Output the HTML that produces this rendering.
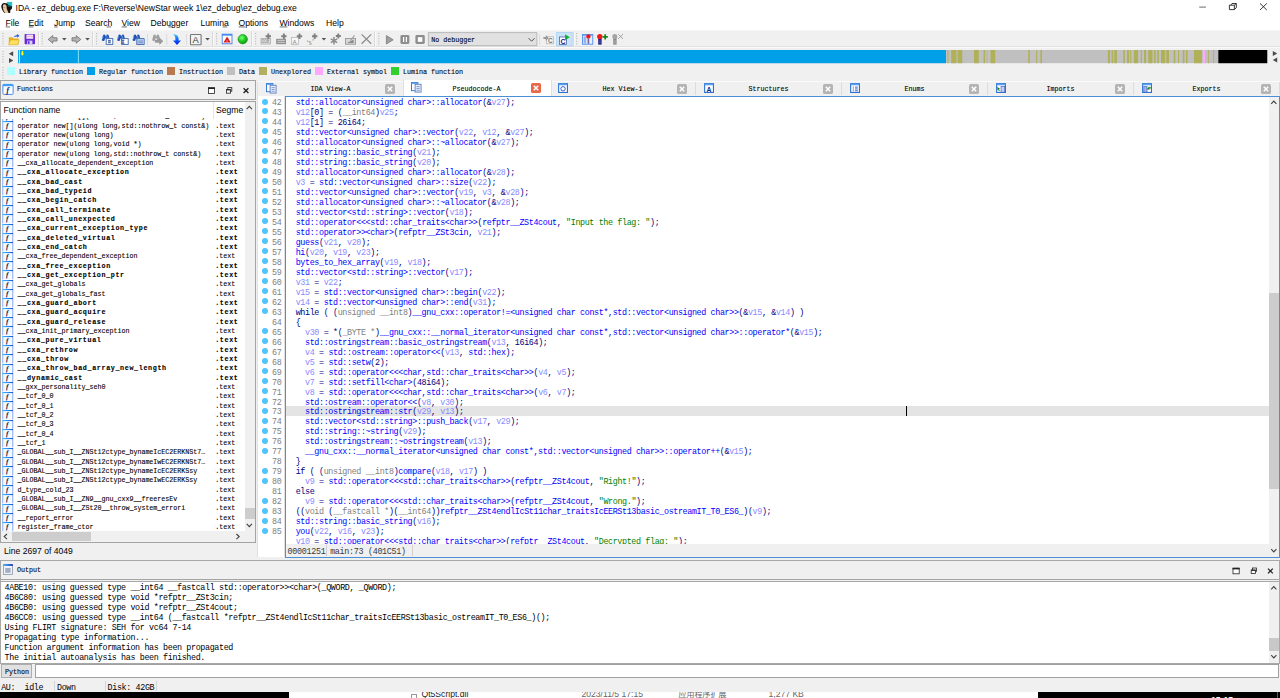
<!DOCTYPE html>
<html><head><meta charset="utf-8"><title>IDA - ez_debug.exe</title>
<style>
*{box-sizing:border-box;margin:0;padding:0}
html,body{width:1280px;height:698px;overflow:hidden;background:#f0f0f0}
body{position:relative;font-family:"Liberation Sans",sans-serif;font-size:8px;color:#000}
.a{position:absolute}
.ui{font-family:"Liberation Sans",sans-serif;font-size:8.3px;white-space:pre;color:#000}
.sim{font-family:"Liberation Mono",monospace;font-size:6.7px;letter-spacing:-0.02px;white-space:pre;color:#000;-webkit-text-stroke:0.1px #000}
.code{font-family:"Liberation Mono",monospace;font-size:8.4px;letter-spacing:-0.365px;white-space:pre;line-height:10px}
.fn{color:#0000ff}.va{color:#8a8aff}.kw{color:#000080}.gr{color:#808080}.st{color:#008000}
</style></head>
<body>
<div class="a" style="left:0px;top:0px;width:1280px;height:30px;background:#fff;"></div>
<div class="a ui" style="left:15.5px;top:2.5px;font-size:8.6px">IDA - ez_debug.exe F:\Reverse\NewStar week 1\ez_debug\ez_debug.exe</div>
<div class="a ui" style="left:5.5px;top:17.5px;font-size:8.6px">File</div>
<div class="a ui" style="left:28.5px;top:17.5px;font-size:8.6px">Edit</div>
<div class="a ui" style="left:54px;top:17.5px;font-size:8.6px">Jump</div>
<div class="a ui" style="left:85px;top:17.5px;font-size:8.6px">Search</div>
<div class="a ui" style="left:121.5px;top:17.5px;font-size:8.6px">View</div>
<div class="a ui" style="left:150.5px;top:17.5px;font-size:8.6px">Debugger</div>
<div class="a ui" style="left:200.5px;top:17.5px;font-size:8.6px">Lumina</div>
<div class="a ui" style="left:238.5px;top:17.5px;font-size:8.6px">Options</div>
<div class="a ui" style="left:279.5px;top:17.5px;font-size:8.6px">Windows</div>
<div class="a ui" style="left:326px;top:17.5px;font-size:8.6px">Help</div>
<div class="a" style="left:0px;top:30px;width:1280px;height:18px;background:#f0f0f0;"></div>
<div class="a" style="left:7.4px;top:67.2px;width:8px;height:8px;background:#b0ffff;"></div>
<div class="a sim" style="left:19px;top:67.8px;">Library function</div>
<div class="a" style="left:87.4px;top:67.2px;width:8px;height:8px;background:#00a0e8;"></div>
<div class="a sim" style="left:99px;top:67.8px;">Regular function</div>
<div class="a" style="left:167.4px;top:67.2px;width:8px;height:8px;background:#b87850;"></div>
<div class="a sim" style="left:179px;top:67.8px;">Instruction</div>
<div class="a" style="left:227.4px;top:67.2px;width:8px;height:8px;background:#c0c0c0;"></div>
<div class="a sim" style="left:239px;top:67.8px;">Data</div>
<div class="a" style="left:259.4px;top:67.2px;width:8px;height:8px;background:#b0b060;"></div>
<div class="a sim" style="left:271px;top:67.8px;">Unexplored</div>
<div class="a" style="left:315.4px;top:67.2px;width:8px;height:8px;background:#ffa8ff;"></div>
<div class="a sim" style="left:327px;top:67.8px;">External symbol</div>
<div class="a" style="left:391.4px;top:67.2px;width:8px;height:8px;background:#30d030;"></div>
<div class="a sim" style="left:403px;top:67.8px;">Lumina function</div>
<div class="a" style="left:0px;top:80px;width:256.3px;height:20px;background:#f0f0f0;border:1px solid #a4a4a4;border-right-width:1.6px;"></div>
<div class="a" style="left:0px;top:101px;width:256.3px;height:441.6px;background:#f0f0f0;border:1px solid #a4a4a4;border-right-width:1.6px;"></div>
<div class="a sim" style="left:17px;top:85.2px;">Functions</div>
<div class="a" style="left:1px;top:102px;width:243.5px;height:429px;background:#fff;"></div>
<div class="a" style="left:1px;top:118.2px;width:243px;height:2.6px;overflow:hidden"><div class="a sim" style="left:16.6px;top:-6.5px">operator delete[](void *,std::nothrow_t const&amp;)</div><div class="a sim" style="left:214.2px;top:-6.5px">.text</div></div>
<div class="a ui" style="left:3.5px;top:105px;font-size:8.6px">Function name</div>
<div class="a ui" style="left:216px;top:105px;font-size:8.6px">Segme</div>
<div class="a" style="left:213px;top:102px;width:1px;height:17px;background:#e5e5e5;"></div>
<svg class="a" width="0" height="0" style="left:0;top:0"><defs><linearGradient id="fg" x1="0" y1="0" x2="1" y2="0"><stop offset="0" stop-color="#38c4f8"/><stop offset="1" stop-color="#2050e0"/></linearGradient></defs></svg>
<svg class="a" style="left:2.3px;top:120.9px" width="11.4" height="9.4" viewBox="0 0 11.4 9.4"><rect x="0" y="0" width="11.4" height="9.4" fill="#f4fbff"/><rect x="0" y="0" width="1.3" height="9.4" fill="#a6c2f4"/><rect x="10" y="0" width="1.4" height="9.4" fill="#a6c2f4"/><rect x="0.4" y="0" width="10.6" height="1.1" fill="url(#fg)"/><text x="4" y="7.2" text-rendering="geometricPrecision" font-family="Liberation Serif,serif" font-style="italic" font-weight="bold" font-size="7" fill="#0c1440">f</text></svg>
<div class="a sim" style="left:17.6px;top:121.8px;">operator new[](ulong long,std::nothrow_t const&amp;)</div>
<div class="a sim" style="left:215.2px;top:121.8px;">.text</div>
<svg class="a" style="left:2.3px;top:130.23px" width="11.4" height="9.4" viewBox="0 0 11.4 9.4"><rect x="0" y="0" width="11.4" height="9.4" fill="#f4fbff"/><rect x="0" y="0" width="1.3" height="9.4" fill="#a6c2f4"/><rect x="10" y="0" width="1.4" height="9.4" fill="#a6c2f4"/><rect x="0.4" y="0" width="10.6" height="1.1" fill="url(#fg)"/><text x="4" y="7.2" text-rendering="geometricPrecision" font-family="Liberation Serif,serif" font-style="italic" font-weight="bold" font-size="7" fill="#0c1440">f</text></svg>
<div class="a sim" style="left:17.6px;top:131.13px;">operator new(ulong long)</div>
<div class="a sim" style="left:215.2px;top:131.13px;">.text</div>
<svg class="a" style="left:2.3px;top:139.57px" width="11.4" height="9.4" viewBox="0 0 11.4 9.4"><rect x="0" y="0" width="11.4" height="9.4" fill="#f4fbff"/><rect x="0" y="0" width="1.3" height="9.4" fill="#a6c2f4"/><rect x="10" y="0" width="1.4" height="9.4" fill="#a6c2f4"/><rect x="0.4" y="0" width="10.6" height="1.1" fill="url(#fg)"/><text x="4" y="7.2" text-rendering="geometricPrecision" font-family="Liberation Serif,serif" font-style="italic" font-weight="bold" font-size="7" fill="#0c1440">f</text></svg>
<div class="a sim" style="left:17.6px;top:140.47px;">operator new(ulong long,void *)</div>
<div class="a sim" style="left:215.2px;top:140.47px;">.text</div>
<svg class="a" style="left:2.3px;top:148.9px" width="11.4" height="9.4" viewBox="0 0 11.4 9.4"><rect x="0" y="0" width="11.4" height="9.4" fill="#f4fbff"/><rect x="0" y="0" width="1.3" height="9.4" fill="#a6c2f4"/><rect x="10" y="0" width="1.4" height="9.4" fill="#a6c2f4"/><rect x="0.4" y="0" width="10.6" height="1.1" fill="url(#fg)"/><text x="4" y="7.2" text-rendering="geometricPrecision" font-family="Liberation Serif,serif" font-style="italic" font-weight="bold" font-size="7" fill="#0c1440">f</text></svg>
<div class="a sim" style="left:17.6px;top:149.8px;">operator new(ulong long,std::nothrow_t const&amp;)</div>
<div class="a sim" style="left:215.2px;top:149.8px;">.text</div>
<svg class="a" style="left:2.3px;top:158.23px" width="11.4" height="9.4" viewBox="0 0 11.4 9.4"><rect x="0" y="0" width="11.4" height="9.4" fill="#f4fbff"/><rect x="0" y="0" width="1.3" height="9.4" fill="#a6c2f4"/><rect x="10" y="0" width="1.4" height="9.4" fill="#a6c2f4"/><rect x="0.4" y="0" width="10.6" height="1.1" fill="url(#fg)"/><text x="4" y="7.2" text-rendering="geometricPrecision" font-family="Liberation Serif,serif" font-style="italic" font-weight="bold" font-size="7" fill="#0c1440">f</text></svg>
<div class="a sim" style="left:17.6px;top:159.13px;">__cxa_allocate_dependent_exception</div>
<div class="a sim" style="left:215.2px;top:159.13px;">.text</div>
<svg class="a" style="left:2.3px;top:167.57px" width="11.4" height="9.4" viewBox="0 0 11.4 9.4"><rect x="0" y="0" width="11.4" height="9.4" fill="#f4fbff"/><rect x="0" y="0" width="1.3" height="9.4" fill="#a6c2f4"/><rect x="10" y="0" width="1.4" height="9.4" fill="#a6c2f4"/><rect x="0.4" y="0" width="10.6" height="1.1" fill="url(#fg)"/><text x="4" y="7.2" text-rendering="geometricPrecision" font-family="Liberation Serif,serif" font-style="italic" font-weight="bold" font-size="7" fill="#0c1440">f</text></svg>
<div class="a sim" style="left:17.6px;top:168.47px;font-weight:bold;letter-spacing:0.647px;">__cxa_allocate_exception</div>
<div class="a sim" style="left:215.2px;top:168.47px;font-weight:bold;letter-spacing:0.647px;">.text</div>
<svg class="a" style="left:2.3px;top:176.9px" width="11.4" height="9.4" viewBox="0 0 11.4 9.4"><rect x="0" y="0" width="11.4" height="9.4" fill="#f4fbff"/><rect x="0" y="0" width="1.3" height="9.4" fill="#a6c2f4"/><rect x="10" y="0" width="1.4" height="9.4" fill="#a6c2f4"/><rect x="0.4" y="0" width="10.6" height="1.1" fill="url(#fg)"/><text x="4" y="7.2" text-rendering="geometricPrecision" font-family="Liberation Serif,serif" font-style="italic" font-weight="bold" font-size="7" fill="#0c1440">f</text></svg>
<div class="a sim" style="left:17.6px;top:177.8px;font-weight:bold;letter-spacing:0.647px;">__cxa_bad_cast</div>
<div class="a sim" style="left:215.2px;top:177.8px;font-weight:bold;letter-spacing:0.647px;">.text</div>
<svg class="a" style="left:2.3px;top:186.23px" width="11.4" height="9.4" viewBox="0 0 11.4 9.4"><rect x="0" y="0" width="11.4" height="9.4" fill="#f4fbff"/><rect x="0" y="0" width="1.3" height="9.4" fill="#a6c2f4"/><rect x="10" y="0" width="1.4" height="9.4" fill="#a6c2f4"/><rect x="0.4" y="0" width="10.6" height="1.1" fill="url(#fg)"/><text x="4" y="7.2" text-rendering="geometricPrecision" font-family="Liberation Serif,serif" font-style="italic" font-weight="bold" font-size="7" fill="#0c1440">f</text></svg>
<div class="a sim" style="left:17.6px;top:187.13px;font-weight:bold;letter-spacing:0.647px;">__cxa_bad_typeid</div>
<div class="a sim" style="left:215.2px;top:187.13px;font-weight:bold;letter-spacing:0.647px;">.text</div>
<svg class="a" style="left:2.3px;top:195.57px" width="11.4" height="9.4" viewBox="0 0 11.4 9.4"><rect x="0" y="0" width="11.4" height="9.4" fill="#f4fbff"/><rect x="0" y="0" width="1.3" height="9.4" fill="#a6c2f4"/><rect x="10" y="0" width="1.4" height="9.4" fill="#a6c2f4"/><rect x="0.4" y="0" width="10.6" height="1.1" fill="url(#fg)"/><text x="4" y="7.2" text-rendering="geometricPrecision" font-family="Liberation Serif,serif" font-style="italic" font-weight="bold" font-size="7" fill="#0c1440">f</text></svg>
<div class="a sim" style="left:17.6px;top:196.47px;font-weight:bold;letter-spacing:0.647px;">__cxa_begin_catch</div>
<div class="a sim" style="left:215.2px;top:196.47px;font-weight:bold;letter-spacing:0.647px;">.text</div>
<svg class="a" style="left:2.3px;top:204.9px" width="11.4" height="9.4" viewBox="0 0 11.4 9.4"><rect x="0" y="0" width="11.4" height="9.4" fill="#f4fbff"/><rect x="0" y="0" width="1.3" height="9.4" fill="#a6c2f4"/><rect x="10" y="0" width="1.4" height="9.4" fill="#a6c2f4"/><rect x="0.4" y="0" width="10.6" height="1.1" fill="url(#fg)"/><text x="4" y="7.2" text-rendering="geometricPrecision" font-family="Liberation Serif,serif" font-style="italic" font-weight="bold" font-size="7" fill="#0c1440">f</text></svg>
<div class="a sim" style="left:17.6px;top:205.8px;font-weight:bold;letter-spacing:0.647px;">__cxa_call_terminate</div>
<div class="a sim" style="left:215.2px;top:205.8px;font-weight:bold;letter-spacing:0.647px;">.text</div>
<svg class="a" style="left:2.3px;top:214.23px" width="11.4" height="9.4" viewBox="0 0 11.4 9.4"><rect x="0" y="0" width="11.4" height="9.4" fill="#f4fbff"/><rect x="0" y="0" width="1.3" height="9.4" fill="#a6c2f4"/><rect x="10" y="0" width="1.4" height="9.4" fill="#a6c2f4"/><rect x="0.4" y="0" width="10.6" height="1.1" fill="url(#fg)"/><text x="4" y="7.2" text-rendering="geometricPrecision" font-family="Liberation Serif,serif" font-style="italic" font-weight="bold" font-size="7" fill="#0c1440">f</text></svg>
<div class="a sim" style="left:17.6px;top:215.13px;font-weight:bold;letter-spacing:0.647px;">__cxa_call_unexpected</div>
<div class="a sim" style="left:215.2px;top:215.13px;font-weight:bold;letter-spacing:0.647px;">.text</div>
<svg class="a" style="left:2.3px;top:223.57px" width="11.4" height="9.4" viewBox="0 0 11.4 9.4"><rect x="0" y="0" width="11.4" height="9.4" fill="#f4fbff"/><rect x="0" y="0" width="1.3" height="9.4" fill="#a6c2f4"/><rect x="10" y="0" width="1.4" height="9.4" fill="#a6c2f4"/><rect x="0.4" y="0" width="10.6" height="1.1" fill="url(#fg)"/><text x="4" y="7.2" text-rendering="geometricPrecision" font-family="Liberation Serif,serif" font-style="italic" font-weight="bold" font-size="7" fill="#0c1440">f</text></svg>
<div class="a sim" style="left:17.6px;top:224.47px;font-weight:bold;letter-spacing:0.647px;">__cxa_current_exception_type</div>
<div class="a sim" style="left:215.2px;top:224.47px;font-weight:bold;letter-spacing:0.647px;">.text</div>
<svg class="a" style="left:2.3px;top:232.9px" width="11.4" height="9.4" viewBox="0 0 11.4 9.4"><rect x="0" y="0" width="11.4" height="9.4" fill="#f4fbff"/><rect x="0" y="0" width="1.3" height="9.4" fill="#a6c2f4"/><rect x="10" y="0" width="1.4" height="9.4" fill="#a6c2f4"/><rect x="0.4" y="0" width="10.6" height="1.1" fill="url(#fg)"/><text x="4" y="7.2" text-rendering="geometricPrecision" font-family="Liberation Serif,serif" font-style="italic" font-weight="bold" font-size="7" fill="#0c1440">f</text></svg>
<div class="a sim" style="left:17.6px;top:233.8px;font-weight:bold;letter-spacing:0.647px;">__cxa_deleted_virtual</div>
<div class="a sim" style="left:215.2px;top:233.8px;font-weight:bold;letter-spacing:0.647px;">.text</div>
<svg class="a" style="left:2.3px;top:242.23px" width="11.4" height="9.4" viewBox="0 0 11.4 9.4"><rect x="0" y="0" width="11.4" height="9.4" fill="#f4fbff"/><rect x="0" y="0" width="1.3" height="9.4" fill="#a6c2f4"/><rect x="10" y="0" width="1.4" height="9.4" fill="#a6c2f4"/><rect x="0.4" y="0" width="10.6" height="1.1" fill="url(#fg)"/><text x="4" y="7.2" text-rendering="geometricPrecision" font-family="Liberation Serif,serif" font-style="italic" font-weight="bold" font-size="7" fill="#0c1440">f</text></svg>
<div class="a sim" style="left:17.6px;top:243.13px;font-weight:bold;letter-spacing:0.647px;">__cxa_end_catch</div>
<div class="a sim" style="left:215.2px;top:243.13px;font-weight:bold;letter-spacing:0.647px;">.text</div>
<svg class="a" style="left:2.3px;top:251.57px" width="11.4" height="9.4" viewBox="0 0 11.4 9.4"><rect x="0" y="0" width="11.4" height="9.4" fill="#f4fbff"/><rect x="0" y="0" width="1.3" height="9.4" fill="#a6c2f4"/><rect x="10" y="0" width="1.4" height="9.4" fill="#a6c2f4"/><rect x="0.4" y="0" width="10.6" height="1.1" fill="url(#fg)"/><text x="4" y="7.2" text-rendering="geometricPrecision" font-family="Liberation Serif,serif" font-style="italic" font-weight="bold" font-size="7" fill="#0c1440">f</text></svg>
<div class="a sim" style="left:17.6px;top:252.47px;">__cxa_free_dependent_exception</div>
<div class="a sim" style="left:215.2px;top:252.47px;">.text</div>
<svg class="a" style="left:2.3px;top:260.9px" width="11.4" height="9.4" viewBox="0 0 11.4 9.4"><rect x="0" y="0" width="11.4" height="9.4" fill="#f4fbff"/><rect x="0" y="0" width="1.3" height="9.4" fill="#a6c2f4"/><rect x="10" y="0" width="1.4" height="9.4" fill="#a6c2f4"/><rect x="0.4" y="0" width="10.6" height="1.1" fill="url(#fg)"/><text x="4" y="7.2" text-rendering="geometricPrecision" font-family="Liberation Serif,serif" font-style="italic" font-weight="bold" font-size="7" fill="#0c1440">f</text></svg>
<div class="a sim" style="left:17.6px;top:261.8px;font-weight:bold;letter-spacing:0.647px;">__cxa_free_exception</div>
<div class="a sim" style="left:215.2px;top:261.8px;font-weight:bold;letter-spacing:0.647px;">.text</div>
<svg class="a" style="left:2.3px;top:270.23px" width="11.4" height="9.4" viewBox="0 0 11.4 9.4"><rect x="0" y="0" width="11.4" height="9.4" fill="#f4fbff"/><rect x="0" y="0" width="1.3" height="9.4" fill="#a6c2f4"/><rect x="10" y="0" width="1.4" height="9.4" fill="#a6c2f4"/><rect x="0.4" y="0" width="10.6" height="1.1" fill="url(#fg)"/><text x="4" y="7.2" text-rendering="geometricPrecision" font-family="Liberation Serif,serif" font-style="italic" font-weight="bold" font-size="7" fill="#0c1440">f</text></svg>
<div class="a sim" style="left:17.6px;top:271.13px;font-weight:bold;letter-spacing:0.647px;">__cxa_get_exception_ptr</div>
<div class="a sim" style="left:215.2px;top:271.13px;font-weight:bold;letter-spacing:0.647px;">.text</div>
<svg class="a" style="left:2.3px;top:279.57px" width="11.4" height="9.4" viewBox="0 0 11.4 9.4"><rect x="0" y="0" width="11.4" height="9.4" fill="#f4fbff"/><rect x="0" y="0" width="1.3" height="9.4" fill="#a6c2f4"/><rect x="10" y="0" width="1.4" height="9.4" fill="#a6c2f4"/><rect x="0.4" y="0" width="10.6" height="1.1" fill="url(#fg)"/><text x="4" y="7.2" text-rendering="geometricPrecision" font-family="Liberation Serif,serif" font-style="italic" font-weight="bold" font-size="7" fill="#0c1440">f</text></svg>
<div class="a sim" style="left:17.6px;top:280.47px;">__cxa_get_globals</div>
<div class="a sim" style="left:215.2px;top:280.47px;">.text</div>
<svg class="a" style="left:2.3px;top:288.9px" width="11.4" height="9.4" viewBox="0 0 11.4 9.4"><rect x="0" y="0" width="11.4" height="9.4" fill="#f4fbff"/><rect x="0" y="0" width="1.3" height="9.4" fill="#a6c2f4"/><rect x="10" y="0" width="1.4" height="9.4" fill="#a6c2f4"/><rect x="0.4" y="0" width="10.6" height="1.1" fill="url(#fg)"/><text x="4" y="7.2" text-rendering="geometricPrecision" font-family="Liberation Serif,serif" font-style="italic" font-weight="bold" font-size="7" fill="#0c1440">f</text></svg>
<div class="a sim" style="left:17.6px;top:289.8px;">__cxa_get_globals_fast</div>
<div class="a sim" style="left:215.2px;top:289.8px;">.text</div>
<svg class="a" style="left:2.3px;top:298.23px" width="11.4" height="9.4" viewBox="0 0 11.4 9.4"><rect x="0" y="0" width="11.4" height="9.4" fill="#f4fbff"/><rect x="0" y="0" width="1.3" height="9.4" fill="#a6c2f4"/><rect x="10" y="0" width="1.4" height="9.4" fill="#a6c2f4"/><rect x="0.4" y="0" width="10.6" height="1.1" fill="url(#fg)"/><text x="4" y="7.2" text-rendering="geometricPrecision" font-family="Liberation Serif,serif" font-style="italic" font-weight="bold" font-size="7" fill="#0c1440">f</text></svg>
<div class="a sim" style="left:17.6px;top:299.13px;font-weight:bold;letter-spacing:0.647px;">__cxa_guard_abort</div>
<div class="a sim" style="left:215.2px;top:299.13px;font-weight:bold;letter-spacing:0.647px;">.text</div>
<svg class="a" style="left:2.3px;top:307.57px" width="11.4" height="9.4" viewBox="0 0 11.4 9.4"><rect x="0" y="0" width="11.4" height="9.4" fill="#f4fbff"/><rect x="0" y="0" width="1.3" height="9.4" fill="#a6c2f4"/><rect x="10" y="0" width="1.4" height="9.4" fill="#a6c2f4"/><rect x="0.4" y="0" width="10.6" height="1.1" fill="url(#fg)"/><text x="4" y="7.2" text-rendering="geometricPrecision" font-family="Liberation Serif,serif" font-style="italic" font-weight="bold" font-size="7" fill="#0c1440">f</text></svg>
<div class="a sim" style="left:17.6px;top:308.47px;font-weight:bold;letter-spacing:0.647px;">__cxa_guard_acquire</div>
<div class="a sim" style="left:215.2px;top:308.47px;font-weight:bold;letter-spacing:0.647px;">.text</div>
<svg class="a" style="left:2.3px;top:316.9px" width="11.4" height="9.4" viewBox="0 0 11.4 9.4"><rect x="0" y="0" width="11.4" height="9.4" fill="#f4fbff"/><rect x="0" y="0" width="1.3" height="9.4" fill="#a6c2f4"/><rect x="10" y="0" width="1.4" height="9.4" fill="#a6c2f4"/><rect x="0.4" y="0" width="10.6" height="1.1" fill="url(#fg)"/><text x="4" y="7.2" text-rendering="geometricPrecision" font-family="Liberation Serif,serif" font-style="italic" font-weight="bold" font-size="7" fill="#0c1440">f</text></svg>
<div class="a sim" style="left:17.6px;top:317.8px;font-weight:bold;letter-spacing:0.647px;">__cxa_guard_release</div>
<div class="a sim" style="left:215.2px;top:317.8px;font-weight:bold;letter-spacing:0.647px;">.text</div>
<svg class="a" style="left:2.3px;top:326.23px" width="11.4" height="9.4" viewBox="0 0 11.4 9.4"><rect x="0" y="0" width="11.4" height="9.4" fill="#f4fbff"/><rect x="0" y="0" width="1.3" height="9.4" fill="#a6c2f4"/><rect x="10" y="0" width="1.4" height="9.4" fill="#a6c2f4"/><rect x="0.4" y="0" width="10.6" height="1.1" fill="url(#fg)"/><text x="4" y="7.2" text-rendering="geometricPrecision" font-family="Liberation Serif,serif" font-style="italic" font-weight="bold" font-size="7" fill="#0c1440">f</text></svg>
<div class="a sim" style="left:17.6px;top:327.13px;">__cxa_init_primary_exception</div>
<div class="a sim" style="left:215.2px;top:327.13px;">.text</div>
<svg class="a" style="left:2.3px;top:335.57px" width="11.4" height="9.4" viewBox="0 0 11.4 9.4"><rect x="0" y="0" width="11.4" height="9.4" fill="#f4fbff"/><rect x="0" y="0" width="1.3" height="9.4" fill="#a6c2f4"/><rect x="10" y="0" width="1.4" height="9.4" fill="#a6c2f4"/><rect x="0.4" y="0" width="10.6" height="1.1" fill="url(#fg)"/><text x="4" y="7.2" text-rendering="geometricPrecision" font-family="Liberation Serif,serif" font-style="italic" font-weight="bold" font-size="7" fill="#0c1440">f</text></svg>
<div class="a sim" style="left:17.6px;top:336.47px;font-weight:bold;letter-spacing:0.647px;">__cxa_pure_virtual</div>
<div class="a sim" style="left:215.2px;top:336.47px;font-weight:bold;letter-spacing:0.647px;">.text</div>
<svg class="a" style="left:2.3px;top:344.9px" width="11.4" height="9.4" viewBox="0 0 11.4 9.4"><rect x="0" y="0" width="11.4" height="9.4" fill="#f4fbff"/><rect x="0" y="0" width="1.3" height="9.4" fill="#a6c2f4"/><rect x="10" y="0" width="1.4" height="9.4" fill="#a6c2f4"/><rect x="0.4" y="0" width="10.6" height="1.1" fill="url(#fg)"/><text x="4" y="7.2" text-rendering="geometricPrecision" font-family="Liberation Serif,serif" font-style="italic" font-weight="bold" font-size="7" fill="#0c1440">f</text></svg>
<div class="a sim" style="left:17.6px;top:345.8px;font-weight:bold;letter-spacing:0.647px;">__cxa_rethrow</div>
<div class="a sim" style="left:215.2px;top:345.8px;font-weight:bold;letter-spacing:0.647px;">.text</div>
<svg class="a" style="left:2.3px;top:354.23px" width="11.4" height="9.4" viewBox="0 0 11.4 9.4"><rect x="0" y="0" width="11.4" height="9.4" fill="#f4fbff"/><rect x="0" y="0" width="1.3" height="9.4" fill="#a6c2f4"/><rect x="10" y="0" width="1.4" height="9.4" fill="#a6c2f4"/><rect x="0.4" y="0" width="10.6" height="1.1" fill="url(#fg)"/><text x="4" y="7.2" text-rendering="geometricPrecision" font-family="Liberation Serif,serif" font-style="italic" font-weight="bold" font-size="7" fill="#0c1440">f</text></svg>
<div class="a sim" style="left:17.6px;top:355.13px;font-weight:bold;letter-spacing:0.647px;">__cxa_throw</div>
<div class="a sim" style="left:215.2px;top:355.13px;font-weight:bold;letter-spacing:0.647px;">.text</div>
<svg class="a" style="left:2.3px;top:363.57px" width="11.4" height="9.4" viewBox="0 0 11.4 9.4"><rect x="0" y="0" width="11.4" height="9.4" fill="#f4fbff"/><rect x="0" y="0" width="1.3" height="9.4" fill="#a6c2f4"/><rect x="10" y="0" width="1.4" height="9.4" fill="#a6c2f4"/><rect x="0.4" y="0" width="10.6" height="1.1" fill="url(#fg)"/><text x="4" y="7.2" text-rendering="geometricPrecision" font-family="Liberation Serif,serif" font-style="italic" font-weight="bold" font-size="7" fill="#0c1440">f</text></svg>
<div class="a sim" style="left:17.6px;top:364.47px;font-weight:bold;letter-spacing:0.647px;">__cxa_throw_bad_array_new_length</div>
<div class="a sim" style="left:215.2px;top:364.47px;font-weight:bold;letter-spacing:0.647px;">.text</div>
<svg class="a" style="left:2.3px;top:372.9px" width="11.4" height="9.4" viewBox="0 0 11.4 9.4"><rect x="0" y="0" width="11.4" height="9.4" fill="#f4fbff"/><rect x="0" y="0" width="1.3" height="9.4" fill="#a6c2f4"/><rect x="10" y="0" width="1.4" height="9.4" fill="#a6c2f4"/><rect x="0.4" y="0" width="10.6" height="1.1" fill="url(#fg)"/><text x="4" y="7.2" text-rendering="geometricPrecision" font-family="Liberation Serif,serif" font-style="italic" font-weight="bold" font-size="7" fill="#0c1440">f</text></svg>
<div class="a sim" style="left:17.6px;top:373.8px;font-weight:bold;letter-spacing:0.647px;">__dynamic_cast</div>
<div class="a sim" style="left:215.2px;top:373.8px;font-weight:bold;letter-spacing:0.647px;">.text</div>
<svg class="a" style="left:2.3px;top:382.23px" width="11.4" height="9.4" viewBox="0 0 11.4 9.4"><rect x="0" y="0" width="11.4" height="9.4" fill="#f4fbff"/><rect x="0" y="0" width="1.3" height="9.4" fill="#a6c2f4"/><rect x="10" y="0" width="1.4" height="9.4" fill="#a6c2f4"/><rect x="0.4" y="0" width="10.6" height="1.1" fill="url(#fg)"/><text x="4" y="7.2" text-rendering="geometricPrecision" font-family="Liberation Serif,serif" font-style="italic" font-weight="bold" font-size="7" fill="#0c1440">f</text></svg>
<div class="a sim" style="left:17.6px;top:383.13px;">__gxx_personality_seh0</div>
<div class="a sim" style="left:215.2px;top:383.13px;">.text</div>
<svg class="a" style="left:2.3px;top:391.57px" width="11.4" height="9.4" viewBox="0 0 11.4 9.4"><rect x="0" y="0" width="11.4" height="9.4" fill="#f4fbff"/><rect x="0" y="0" width="1.3" height="9.4" fill="#a6c2f4"/><rect x="10" y="0" width="1.4" height="9.4" fill="#a6c2f4"/><rect x="0.4" y="0" width="10.6" height="1.1" fill="url(#fg)"/><text x="4" y="7.2" text-rendering="geometricPrecision" font-family="Liberation Serif,serif" font-style="italic" font-weight="bold" font-size="7" fill="#0c1440">f</text></svg>
<div class="a sim" style="left:17.6px;top:392.47px;">__tcf_0_0</div>
<div class="a sim" style="left:215.2px;top:392.47px;">.text</div>
<svg class="a" style="left:2.3px;top:400.9px" width="11.4" height="9.4" viewBox="0 0 11.4 9.4"><rect x="0" y="0" width="11.4" height="9.4" fill="#f4fbff"/><rect x="0" y="0" width="1.3" height="9.4" fill="#a6c2f4"/><rect x="10" y="0" width="1.4" height="9.4" fill="#a6c2f4"/><rect x="0.4" y="0" width="10.6" height="1.1" fill="url(#fg)"/><text x="4" y="7.2" text-rendering="geometricPrecision" font-family="Liberation Serif,serif" font-style="italic" font-weight="bold" font-size="7" fill="#0c1440">f</text></svg>
<div class="a sim" style="left:17.6px;top:401.8px;">__tcf_0_1</div>
<div class="a sim" style="left:215.2px;top:401.8px;">.text</div>
<svg class="a" style="left:2.3px;top:410.23px" width="11.4" height="9.4" viewBox="0 0 11.4 9.4"><rect x="0" y="0" width="11.4" height="9.4" fill="#f4fbff"/><rect x="0" y="0" width="1.3" height="9.4" fill="#a6c2f4"/><rect x="10" y="0" width="1.4" height="9.4" fill="#a6c2f4"/><rect x="0.4" y="0" width="10.6" height="1.1" fill="url(#fg)"/><text x="4" y="7.2" text-rendering="geometricPrecision" font-family="Liberation Serif,serif" font-style="italic" font-weight="bold" font-size="7" fill="#0c1440">f</text></svg>
<div class="a sim" style="left:17.6px;top:411.13px;">__tcf_0_2</div>
<div class="a sim" style="left:215.2px;top:411.13px;">.text</div>
<svg class="a" style="left:2.3px;top:419.57px" width="11.4" height="9.4" viewBox="0 0 11.4 9.4"><rect x="0" y="0" width="11.4" height="9.4" fill="#f4fbff"/><rect x="0" y="0" width="1.3" height="9.4" fill="#a6c2f4"/><rect x="10" y="0" width="1.4" height="9.4" fill="#a6c2f4"/><rect x="0.4" y="0" width="10.6" height="1.1" fill="url(#fg)"/><text x="4" y="7.2" text-rendering="geometricPrecision" font-family="Liberation Serif,serif" font-style="italic" font-weight="bold" font-size="7" fill="#0c1440">f</text></svg>
<div class="a sim" style="left:17.6px;top:420.47px;">__tcf_0_3</div>
<div class="a sim" style="left:215.2px;top:420.47px;">.text</div>
<svg class="a" style="left:2.3px;top:428.9px" width="11.4" height="9.4" viewBox="0 0 11.4 9.4"><rect x="0" y="0" width="11.4" height="9.4" fill="#f4fbff"/><rect x="0" y="0" width="1.3" height="9.4" fill="#a6c2f4"/><rect x="10" y="0" width="1.4" height="9.4" fill="#a6c2f4"/><rect x="0.4" y="0" width="10.6" height="1.1" fill="url(#fg)"/><text x="4" y="7.2" text-rendering="geometricPrecision" font-family="Liberation Serif,serif" font-style="italic" font-weight="bold" font-size="7" fill="#0c1440">f</text></svg>
<div class="a sim" style="left:17.6px;top:429.8px;">__tcf_0_4</div>
<div class="a sim" style="left:215.2px;top:429.8px;">.text</div>
<svg class="a" style="left:2.3px;top:438.23px" width="11.4" height="9.4" viewBox="0 0 11.4 9.4"><rect x="0" y="0" width="11.4" height="9.4" fill="#f4fbff"/><rect x="0" y="0" width="1.3" height="9.4" fill="#a6c2f4"/><rect x="10" y="0" width="1.4" height="9.4" fill="#a6c2f4"/><rect x="0.4" y="0" width="10.6" height="1.1" fill="url(#fg)"/><text x="4" y="7.2" text-rendering="geometricPrecision" font-family="Liberation Serif,serif" font-style="italic" font-weight="bold" font-size="7" fill="#0c1440">f</text></svg>
<div class="a sim" style="left:17.6px;top:439.13px;">__tcf_1</div>
<div class="a sim" style="left:215.2px;top:439.13px;">.text</div>
<svg class="a" style="left:2.3px;top:447.57px" width="11.4" height="9.4" viewBox="0 0 11.4 9.4"><rect x="0" y="0" width="11.4" height="9.4" fill="#f4fbff"/><rect x="0" y="0" width="1.3" height="9.4" fill="#a6c2f4"/><rect x="10" y="0" width="1.4" height="9.4" fill="#a6c2f4"/><rect x="0.4" y="0" width="10.6" height="1.1" fill="url(#fg)"/><text x="4" y="7.2" text-rendering="geometricPrecision" font-family="Liberation Serif,serif" font-style="italic" font-weight="bold" font-size="7" fill="#0c1440">f</text></svg>
<div class="a sim" style="left:17.6px;top:448.47px;">_GLOBAL__sub_I__ZNSt12ctype_bynameIcEC2ERKNSt7…</div>
<div class="a sim" style="left:215.2px;top:448.47px;">.text</div>
<svg class="a" style="left:2.3px;top:456.9px" width="11.4" height="9.4" viewBox="0 0 11.4 9.4"><rect x="0" y="0" width="11.4" height="9.4" fill="#f4fbff"/><rect x="0" y="0" width="1.3" height="9.4" fill="#a6c2f4"/><rect x="10" y="0" width="1.4" height="9.4" fill="#a6c2f4"/><rect x="0.4" y="0" width="10.6" height="1.1" fill="url(#fg)"/><text x="4" y="7.2" text-rendering="geometricPrecision" font-family="Liberation Serif,serif" font-style="italic" font-weight="bold" font-size="7" fill="#0c1440">f</text></svg>
<div class="a sim" style="left:17.6px;top:457.8px;">_GLOBAL__sub_I__ZNSt12ctype_bynameIwEC2ERKNSt7…</div>
<div class="a sim" style="left:215.2px;top:457.8px;">.text</div>
<svg class="a" style="left:2.3px;top:466.23px" width="11.4" height="9.4" viewBox="0 0 11.4 9.4"><rect x="0" y="0" width="11.4" height="9.4" fill="#f4fbff"/><rect x="0" y="0" width="1.3" height="9.4" fill="#a6c2f4"/><rect x="10" y="0" width="1.4" height="9.4" fill="#a6c2f4"/><rect x="0.4" y="0" width="10.6" height="1.1" fill="url(#fg)"/><text x="4" y="7.2" text-rendering="geometricPrecision" font-family="Liberation Serif,serif" font-style="italic" font-weight="bold" font-size="7" fill="#0c1440">f</text></svg>
<div class="a sim" style="left:17.6px;top:467.13px;">_GLOBAL__sub_I__ZNSt12ctype_bynameIcEC2ERKSsy</div>
<div class="a sim" style="left:215.2px;top:467.13px;">.text</div>
<svg class="a" style="left:2.3px;top:475.57px" width="11.4" height="9.4" viewBox="0 0 11.4 9.4"><rect x="0" y="0" width="11.4" height="9.4" fill="#f4fbff"/><rect x="0" y="0" width="1.3" height="9.4" fill="#a6c2f4"/><rect x="10" y="0" width="1.4" height="9.4" fill="#a6c2f4"/><rect x="0.4" y="0" width="10.6" height="1.1" fill="url(#fg)"/><text x="4" y="7.2" text-rendering="geometricPrecision" font-family="Liberation Serif,serif" font-style="italic" font-weight="bold" font-size="7" fill="#0c1440">f</text></svg>
<div class="a sim" style="left:17.6px;top:476.47px;">_GLOBAL__sub_I__ZNSt12ctype_bynameIwEC2ERKSsy</div>
<div class="a sim" style="left:215.2px;top:476.47px;">.text</div>
<svg class="a" style="left:2.3px;top:484.9px" width="11.4" height="9.4" viewBox="0 0 11.4 9.4"><rect x="0" y="0" width="11.4" height="9.4" fill="#f4fbff"/><rect x="0" y="0" width="1.3" height="9.4" fill="#a6c2f4"/><rect x="10" y="0" width="1.4" height="9.4" fill="#a6c2f4"/><rect x="0.4" y="0" width="10.6" height="1.1" fill="url(#fg)"/><text x="4" y="7.2" text-rendering="geometricPrecision" font-family="Liberation Serif,serif" font-style="italic" font-weight="bold" font-size="7" fill="#0c1440">f</text></svg>
<div class="a sim" style="left:17.6px;top:485.8px;">d_type_cold_23</div>
<div class="a sim" style="left:215.2px;top:485.8px;">.text</div>
<svg class="a" style="left:2.3px;top:494.23px" width="11.4" height="9.4" viewBox="0 0 11.4 9.4"><rect x="0" y="0" width="11.4" height="9.4" fill="#f4fbff"/><rect x="0" y="0" width="1.3" height="9.4" fill="#a6c2f4"/><rect x="10" y="0" width="1.4" height="9.4" fill="#a6c2f4"/><rect x="0.4" y="0" width="10.6" height="1.1" fill="url(#fg)"/><text x="4" y="7.2" text-rendering="geometricPrecision" font-family="Liberation Serif,serif" font-style="italic" font-weight="bold" font-size="7" fill="#0c1440">f</text></svg>
<div class="a sim" style="left:17.6px;top:495.13px;">_GLOBAL__sub_I__ZN9__gnu_cxx9__freeresEv</div>
<div class="a sim" style="left:215.2px;top:495.13px;">.text</div>
<svg class="a" style="left:2.3px;top:503.57px" width="11.4" height="9.4" viewBox="0 0 11.4 9.4"><rect x="0" y="0" width="11.4" height="9.4" fill="#f4fbff"/><rect x="0" y="0" width="1.3" height="9.4" fill="#a6c2f4"/><rect x="10" y="0" width="1.4" height="9.4" fill="#a6c2f4"/><rect x="0.4" y="0" width="10.6" height="1.1" fill="url(#fg)"/><text x="4" y="7.2" text-rendering="geometricPrecision" font-family="Liberation Serif,serif" font-style="italic" font-weight="bold" font-size="7" fill="#0c1440">f</text></svg>
<div class="a sim" style="left:17.6px;top:504.47px;">_GLOBAL__sub_I__ZSt20__throw_system_errori</div>
<div class="a sim" style="left:215.2px;top:504.47px;">.text</div>
<svg class="a" style="left:2.3px;top:512.9px" width="11.4" height="9.4" viewBox="0 0 11.4 9.4"><rect x="0" y="0" width="11.4" height="9.4" fill="#f4fbff"/><rect x="0" y="0" width="1.3" height="9.4" fill="#a6c2f4"/><rect x="10" y="0" width="1.4" height="9.4" fill="#a6c2f4"/><rect x="0.4" y="0" width="10.6" height="1.1" fill="url(#fg)"/><text x="4" y="7.2" text-rendering="geometricPrecision" font-family="Liberation Serif,serif" font-style="italic" font-weight="bold" font-size="7" fill="#0c1440">f</text></svg>
<div class="a sim" style="left:17.6px;top:513.8px;">__report_error</div>
<div class="a sim" style="left:215.2px;top:513.8px;">.text</div>
<svg class="a" style="left:2.3px;top:522.23px" width="11.4" height="9.4" viewBox="0 0 11.4 9.4"><rect x="0" y="0" width="11.4" height="9.4" fill="#f4fbff"/><rect x="0" y="0" width="1.3" height="9.4" fill="#a6c2f4"/><rect x="10" y="0" width="1.4" height="9.4" fill="#a6c2f4"/><rect x="0.4" y="0" width="10.6" height="1.1" fill="url(#fg)"/><text x="4" y="7.2" text-rendering="geometricPrecision" font-family="Liberation Serif,serif" font-style="italic" font-weight="bold" font-size="7" fill="#0c1440">f</text></svg>
<div class="a sim" style="left:17.6px;top:523.13px;">register_frame_ctor</div>
<div class="a sim" style="left:215.2px;top:523.13px;">.text</div>
<div class="a" style="left:2.3px;top:118.6px;width:11.4px;height:2.6px;overflow:hidden"><svg class="a" style="left:0px;top:-6.8px" width="11.4" height="9.4" viewBox="0 0 11.4 9.4"><rect x="0" y="0" width="11.4" height="9.4" fill="#f4fbff"/><rect x="0" y="0" width="1.3" height="9.4" fill="#a6c2f4"/><rect x="10" y="0" width="1.4" height="9.4" fill="#a6c2f4"/><rect x="0.4" y="0" width="10.6" height="1.1" fill="url(#fg)"/><text x="4" y="7.2" text-rendering="geometricPrecision" font-family="Liberation Serif,serif" font-style="italic" font-weight="bold" font-size="7" fill="#0c1440">f</text></svg></div>
<div class="a" style="left:244.5px;top:102px;width:10px;height:429px;background:#f0f0f0;"></div>
<div class="a" style="left:244.5px;top:507.5px;width:10px;height:11.5px;background:#cdcdcd;"></div>
<div class="a" style="left:1px;top:531px;width:254px;height:11px;background:#f0f0f0;"></div>
<div class="a" style="left:12px;top:532px;width:79px;height:8.8px;background:#cdcdcd;"></div>
<div class="a ui" style="left:4px;top:545.7px;font-size:8.6px">Line 2697 of 4049</div>
<div class="a" style="left:258px;top:81px;width:1022px;height:15px;background:#f0f0f0;border-top:1px solid #fafafa;"></div>
<div class="a" style="left:403px;top:82px;width:1px;height:13px;background:#dcdcdc;"></div>
<svg class="a" style="left:266px;top:82.5px" width="11" height="11" viewBox="0 0 12 12"><rect x="0.5" y="0.5" width="7" height="9" fill="#fff" stroke="#2a6fd0"/><rect x="0.5" y="0.5" width="7" height="1.6" fill="#58a0f0"/><rect x="4.5" y="2.5" width="6.5" height="8.5" fill="#e8f0ff" stroke="#6080c0"/><path d="M6 5h3.5M6 7h3.5M6 9h3.5" stroke="#6080c0" stroke-width="0.8"/></svg>
<div class="a sim" style="left:310.5px;top:85.3px;">IDA View-A</div>
<svg class="a" style="left:385px;top:83.5px" width="10" height="10" viewBox="0 0 10 10"><rect x="0" y="0" width="10" height="10" rx="1.6" fill="#b4b4b4"/><path d="M2.8 2.8l4.4 4.4M7.2 2.8l-4.4 4.4" stroke="#fff" stroke-width="1.5"/></svg>
<div class="a" style="left:403px;top:80px;width:148.5px;height:16.5px;background:#fff;border-left:1px solid #e0e0e0;border-right:1px solid #e0e0e0;"></div>
<svg class="a" style="left:411px;top:82px" width="11" height="11" viewBox="0 0 12 12"><rect x="0.5" y="0.5" width="7" height="9" fill="#fff" stroke="#2a6fd0"/><rect x="0.5" y="0.5" width="7" height="1.6" fill="#58a0f0"/><rect x="4.5" y="2.5" width="6.5" height="8.5" fill="#e8f0ff" stroke="#6080c0"/><path d="M6 5h3.5M6 7h3.5M6 9h3.5" stroke="#6080c0" stroke-width="0.8"/></svg>
<div class="a sim" style="left:452.5px;top:84.8px;">Pseudocode-A</div>
<svg class="a" style="left:531px;top:83px" width="10" height="10" viewBox="0 0 10 10"><rect x="0" y="0" width="10" height="10" rx="1.6" fill="#e8694a"/><path d="M2.8 2.8l4.4 4.4M7.2 2.8l-4.4 4.4" stroke="#fff" stroke-width="1.5"/></svg>
<div class="a" style="left:695px;top:82px;width:1px;height:13px;background:#dcdcdc;"></div>
<svg class="a" style="left:558px;top:82.5px" width="11" height="11" viewBox="0 0 12 12"><rect x="0.7" y="0.7" width="9.6" height="9.6" fill="#fff" stroke="#2a6fd0" stroke-width="1.2"/><rect x="0.7" y="0.7" width="9.6" height="1.8" fill="#58a0f0"/><circle cx="5.5" cy="6.3" r="2.4" fill="none" stroke="#2a50d0" stroke-width="1"/></svg>
<div class="a sim" style="left:602.5px;top:85.3px;">Hex View-1</div>
<svg class="a" style="left:677px;top:83.5px" width="10" height="10" viewBox="0 0 10 10"><rect x="0" y="0" width="10" height="10" rx="1.6" fill="#b4b4b4"/><path d="M2.8 2.8l4.4 4.4M7.2 2.8l-4.4 4.4" stroke="#fff" stroke-width="1.5"/></svg>
<div class="a" style="left:841px;top:82px;width:1px;height:13px;background:#dcdcdc;"></div>
<svg class="a" style="left:704px;top:82.5px" width="11" height="11" viewBox="0 0 12 12"><rect x="0.7" y="0.7" width="9.6" height="9.6" fill="#fff" stroke="#2a6fd0" stroke-width="1.2"/><rect x="0.7" y="0.7" width="9.6" height="1.8" fill="#58a0f0"/><text x="2.6" y="9.3" font-family="Liberation Sans,sans-serif" font-weight="bold" font-size="7.5" fill="#103090">A</text></svg>
<div class="a sim" style="left:748.5px;top:85.3px;">Structures</div>
<svg class="a" style="left:823px;top:83.5px" width="10" height="10" viewBox="0 0 10 10"><rect x="0" y="0" width="10" height="10" rx="1.6" fill="#b4b4b4"/><path d="M2.8 2.8l4.4 4.4M7.2 2.8l-4.4 4.4" stroke="#fff" stroke-width="1.5"/></svg>
<div class="a" style="left:987px;top:82px;width:1px;height:13px;background:#dcdcdc;"></div>
<svg class="a" style="left:850px;top:82.5px" width="11" height="11" viewBox="0 0 12 12"><rect x="0.7" y="0.7" width="9.6" height="9.6" fill="#fff" stroke="#2a6fd0" stroke-width="1.2"/><rect x="0.7" y="0.7" width="9.6" height="1.8" fill="#58a0f0"/><path d="M3 4.5h1.2M3 6.5h1.2M3 8.5h1.2M5.5 4.5h3M5.5 6.5h3M5.5 8.5h3" stroke="#2a50d0" stroke-width="1"/></svg>
<div class="a sim" style="left:904.5px;top:85.3px;">Enums</div>
<svg class="a" style="left:969px;top:83.5px" width="10" height="10" viewBox="0 0 10 10"><rect x="0" y="0" width="10" height="10" rx="1.6" fill="#b4b4b4"/><path d="M2.8 2.8l4.4 4.4M7.2 2.8l-4.4 4.4" stroke="#fff" stroke-width="1.5"/></svg>
<div class="a" style="left:1133px;top:82px;width:1px;height:13px;background:#dcdcdc;"></div>
<svg class="a" style="left:996px;top:82.5px" width="11" height="11" viewBox="0 0 12 12"><rect x="0.7" y="0.7" width="9.6" height="9.6" fill="#fff" stroke="#2a6fd0" stroke-width="1.2"/><rect x="0.7" y="0.7" width="9.6" height="1.8" fill="#58a0f0"/><rect x="5.5" y="4" width="4" height="6" fill="#c0d0ff" stroke="#4060b0" stroke-width="0.7"/><path d="M1.5 4l3 2.5-1.3.3 1 1.8-.9.4-1-1.8-.8.8z" fill="#108010"/></svg>
<div class="a sim" style="left:1046.5px;top:85.3px;">Imports</div>
<svg class="a" style="left:1115px;top:83.5px" width="10" height="10" viewBox="0 0 10 10"><rect x="0" y="0" width="10" height="10" rx="1.6" fill="#b4b4b4"/><path d="M2.8 2.8l4.4 4.4M7.2 2.8l-4.4 4.4" stroke="#fff" stroke-width="1.5"/></svg>
<div class="a" style="left:1279px;top:82px;width:1px;height:13px;background:#dcdcdc;"></div>
<svg class="a" style="left:1142px;top:82.5px" width="11" height="11" viewBox="0 0 12 12"><rect x="0.7" y="0.7" width="9.6" height="9.6" fill="#fff" stroke="#2a6fd0" stroke-width="1.2"/><rect x="0.7" y="0.7" width="9.6" height="1.8" fill="#58a0f0"/><rect x="2" y="4" width="3.5" height="6" fill="#a0b0f0" stroke="#4060b0" stroke-width="0.7"/><path d="M5 7l3-3.5.2 1.3 1.8-.3v1.2l-1.9.2.3 1.2z" fill="#108010"/></svg>
<div class="a sim" style="left:1192.5px;top:85.3px;">Exports</div>
<svg class="a" style="left:1261px;top:83.5px" width="10" height="10" viewBox="0 0 10 10"><rect x="0" y="0" width="10" height="10" rx="1.6" fill="#b4b4b4"/><path d="M2.8 2.8l4.4 4.4M7.2 2.8l-4.4 4.4" stroke="#fff" stroke-width="1.5"/></svg>
<div class="a" style="left:258px;top:96px;width:26px;height:461px;background:#fff;"></div>
<div class="a" style="left:257px;top:82px;width:1px;height:475px;background:#e2e2e2;"></div>
<div class="a" style="left:284px;top:96px;width:1px;height:461px;background:#e0e0e0;"></div>
<div class="a" style="left:285px;top:96px;width:995px;height:462px;background:#fff;border:1px solid #4a90d9;"></div>
<div class="a" style="left:286px;top:405.9px;width:983px;height:10px;background:#e4e4e4;"></div>
<div class="a" style="left:906.2px;top:406.2px;width:1.2px;height:9.6px;background:#000;"></div>
<div class="a" style="left:1269px;top:97px;width:9.6px;height:460px;background:#f0f0f0;"></div>
<div class="a" style="left:1269px;top:293px;width:9.6px;height:196px;background:#cdcdcd;"></div>
<div class="a" style="left:286px;top:544px;width:982.5px;height:13px;background:#f0f0f0;"></div>
<div class="a" style="left:261.8px;top:98.5px;width:6px;height:6px;background:#4fc4ff;border-radius:50%;"></div>
<div class="a code" style="left:272px;top:97.8px;color:#808080">42</div>
<div class="a code" style="left:295.7px;top:97.8px;"><span class="fn">std::allocator&lt;unsigned char&gt;::allocator</span><span class="kw">(</span><span class="kw">&amp;</span><span class="va">v27</span><span class="kw">)</span><span class="kw">;</span></div>
<div class="a" style="left:261.8px;top:108.49px;width:6px;height:6px;background:#4fc4ff;border-radius:50%;"></div>
<div class="a code" style="left:272px;top:107.79px;color:#808080">43</div>
<div class="a code" style="left:295.7px;top:107.79px;"><span class="va">v12</span><span class="kw">[</span><span class="kw">0</span><span class="kw">]</span><span class="kw"> </span><span class="kw">=</span><span class="kw"> </span><span class="kw">(</span><span class="gr">__int64</span><span class="kw">)</span><span class="va">v25</span><span class="kw">;</span></div>
<div class="a" style="left:261.8px;top:118.48px;width:6px;height:6px;background:#4fc4ff;border-radius:50%;"></div>
<div class="a code" style="left:272px;top:117.78px;color:#808080">44</div>
<div class="a code" style="left:295.7px;top:117.78px;"><span class="va">v12</span><span class="kw">[</span><span class="kw">1</span><span class="kw">]</span><span class="kw"> </span><span class="kw">=</span><span class="kw"> </span><span class="kw">26i64</span><span class="kw">;</span></div>
<div class="a" style="left:261.8px;top:128.47px;width:6px;height:6px;background:#4fc4ff;border-radius:50%;"></div>
<div class="a code" style="left:272px;top:127.77px;color:#808080">45</div>
<div class="a code" style="left:295.7px;top:127.77px;"><span class="fn">std::vector&lt;unsigned char&gt;::vector</span><span class="kw">(</span><span class="va">v22</span><span class="kw">,</span><span class="kw"> </span><span class="va">v12</span><span class="kw">,</span><span class="kw"> </span><span class="kw">&amp;</span><span class="va">v27</span><span class="kw">)</span><span class="kw">;</span></div>
<div class="a" style="left:261.8px;top:138.46px;width:6px;height:6px;background:#4fc4ff;border-radius:50%;"></div>
<div class="a code" style="left:272px;top:137.76px;color:#808080">46</div>
<div class="a code" style="left:295.7px;top:137.76px;"><span class="fn">std::allocator&lt;unsigned char&gt;::~allocator</span><span class="kw">(</span><span class="kw">&amp;</span><span class="va">v27</span><span class="kw">)</span><span class="kw">;</span></div>
<div class="a" style="left:261.8px;top:148.45px;width:6px;height:6px;background:#4fc4ff;border-radius:50%;"></div>
<div class="a code" style="left:272px;top:147.75px;color:#808080">47</div>
<div class="a code" style="left:295.7px;top:147.75px;"><span class="fn">std::string::basic_string</span><span class="kw">(</span><span class="va">v21</span><span class="kw">)</span><span class="kw">;</span></div>
<div class="a" style="left:261.8px;top:158.44px;width:6px;height:6px;background:#4fc4ff;border-radius:50%;"></div>
<div class="a code" style="left:272px;top:157.74px;color:#808080">48</div>
<div class="a code" style="left:295.7px;top:157.74px;"><span class="fn">std::string::basic_string</span><span class="kw">(</span><span class="va">v20</span><span class="kw">)</span><span class="kw">;</span></div>
<div class="a" style="left:261.8px;top:168.43px;width:6px;height:6px;background:#4fc4ff;border-radius:50%;"></div>
<div class="a code" style="left:272px;top:167.73px;color:#808080">49</div>
<div class="a code" style="left:295.7px;top:167.73px;"><span class="fn">std::allocator&lt;unsigned char&gt;::allocator</span><span class="kw">(</span><span class="kw">&amp;</span><span class="va">v28</span><span class="kw">)</span><span class="kw">;</span></div>
<div class="a" style="left:261.8px;top:178.42px;width:6px;height:6px;background:#4fc4ff;border-radius:50%;"></div>
<div class="a code" style="left:272px;top:177.72px;color:#808080">50</div>
<div class="a code" style="left:295.7px;top:177.72px;"><span class="va">v3</span><span class="kw"> </span><span class="kw">=</span><span class="kw"> </span><span class="fn">std::vector&lt;unsigned char&gt;::size</span><span class="kw">(</span><span class="va">v22</span><span class="kw">)</span><span class="kw">;</span></div>
<div class="a" style="left:261.8px;top:188.41px;width:6px;height:6px;background:#4fc4ff;border-radius:50%;"></div>
<div class="a code" style="left:272px;top:187.71px;color:#808080">51</div>
<div class="a code" style="left:295.7px;top:187.71px;"><span class="fn">std::vector&lt;unsigned char&gt;::vector</span><span class="kw">(</span><span class="va">v19</span><span class="kw">,</span><span class="kw"> </span><span class="va">v3</span><span class="kw">,</span><span class="kw"> </span><span class="kw">&amp;</span><span class="va">v28</span><span class="kw">)</span><span class="kw">;</span></div>
<div class="a" style="left:261.8px;top:198.4px;width:6px;height:6px;background:#4fc4ff;border-radius:50%;"></div>
<div class="a code" style="left:272px;top:197.7px;color:#808080">52</div>
<div class="a code" style="left:295.7px;top:197.7px;"><span class="fn">std::allocator&lt;unsigned char&gt;::~allocator</span><span class="kw">(</span><span class="kw">&amp;</span><span class="va">v28</span><span class="kw">)</span><span class="kw">;</span></div>
<div class="a" style="left:261.8px;top:208.39px;width:6px;height:6px;background:#4fc4ff;border-radius:50%;"></div>
<div class="a code" style="left:272px;top:207.69px;color:#808080">53</div>
<div class="a code" style="left:295.7px;top:207.69px;"><span class="fn">std::vector&lt;std::string&gt;::vector</span><span class="kw">(</span><span class="va">v18</span><span class="kw">)</span><span class="kw">;</span></div>
<div class="a" style="left:261.8px;top:218.38px;width:6px;height:6px;background:#4fc4ff;border-radius:50%;"></div>
<div class="a code" style="left:272px;top:217.68px;color:#808080">54</div>
<div class="a code" style="left:295.7px;top:217.68px;"><span class="fn">std::operator&lt;&lt;&lt;std::char_traits&lt;char&gt;&gt;</span><span class="kw">(</span><span class="fn">refptr__ZSt4cout</span><span class="kw">,</span><span class="kw"> </span><span class="st">&quot;Input the flag: &quot;</span><span class="kw">)</span><span class="kw">;</span></div>
<div class="a" style="left:261.8px;top:228.37px;width:6px;height:6px;background:#4fc4ff;border-radius:50%;"></div>
<div class="a code" style="left:272px;top:227.67px;color:#808080">55</div>
<div class="a code" style="left:295.7px;top:227.67px;"><span class="fn">std::operator&gt;&gt;&lt;char&gt;</span><span class="kw">(</span><span class="fn">refptr__ZSt3cin</span><span class="kw">,</span><span class="kw"> </span><span class="va">v21</span><span class="kw">)</span><span class="kw">;</span></div>
<div class="a" style="left:261.8px;top:238.36px;width:6px;height:6px;background:#4fc4ff;border-radius:50%;"></div>
<div class="a code" style="left:272px;top:237.66px;color:#808080">56</div>
<div class="a code" style="left:295.7px;top:237.66px;"><span class="fn">guess</span><span class="kw">(</span><span class="va">v21</span><span class="kw">,</span><span class="kw"> </span><span class="va">v20</span><span class="kw">)</span><span class="kw">;</span></div>
<div class="a" style="left:261.8px;top:248.35px;width:6px;height:6px;background:#4fc4ff;border-radius:50%;"></div>
<div class="a code" style="left:272px;top:247.65px;color:#808080">57</div>
<div class="a code" style="left:295.7px;top:247.65px;"><span class="fn">hi</span><span class="kw">(</span><span class="va">v20</span><span class="kw">,</span><span class="kw"> </span><span class="va">v19</span><span class="kw">,</span><span class="kw"> </span><span class="va">v23</span><span class="kw">)</span><span class="kw">;</span></div>
<div class="a" style="left:261.8px;top:258.34px;width:6px;height:6px;background:#4fc4ff;border-radius:50%;"></div>
<div class="a code" style="left:272px;top:257.64px;color:#808080">58</div>
<div class="a code" style="left:295.7px;top:257.64px;"><span class="fn">bytes_to_hex_array</span><span class="kw">(</span><span class="va">v19</span><span class="kw">,</span><span class="kw"> </span><span class="va">v18</span><span class="kw">)</span><span class="kw">;</span></div>
<div class="a" style="left:261.8px;top:268.33px;width:6px;height:6px;background:#4fc4ff;border-radius:50%;"></div>
<div class="a code" style="left:272px;top:267.63px;color:#808080">59</div>
<div class="a code" style="left:295.7px;top:267.63px;"><span class="fn">std::vector&lt;std::string&gt;::vector</span><span class="kw">(</span><span class="va">v17</span><span class="kw">)</span><span class="kw">;</span></div>
<div class="a" style="left:261.8px;top:278.32px;width:6px;height:6px;background:#4fc4ff;border-radius:50%;"></div>
<div class="a code" style="left:272px;top:277.62px;color:#808080">60</div>
<div class="a code" style="left:295.7px;top:277.62px;"><span class="va">v31</span><span class="kw"> </span><span class="kw">=</span><span class="kw"> </span><span class="va">v22</span><span class="kw">;</span></div>
<div class="a" style="left:261.8px;top:288.31px;width:6px;height:6px;background:#4fc4ff;border-radius:50%;"></div>
<div class="a code" style="left:272px;top:287.61px;color:#808080">61</div>
<div class="a code" style="left:295.7px;top:287.61px;"><span class="va">v15</span><span class="kw"> </span><span class="kw">=</span><span class="kw"> </span><span class="fn">std::vector&lt;unsigned char&gt;::begin</span><span class="kw">(</span><span class="va">v22</span><span class="kw">)</span><span class="kw">;</span></div>
<div class="a" style="left:261.8px;top:298.3px;width:6px;height:6px;background:#4fc4ff;border-radius:50%;"></div>
<div class="a code" style="left:272px;top:297.6px;color:#808080">62</div>
<div class="a code" style="left:295.7px;top:297.6px;"><span class="va">v14</span><span class="kw"> </span><span class="kw">=</span><span class="kw"> </span><span class="fn">std::vector&lt;unsigned char&gt;::end</span><span class="kw">(</span><span class="va">v31</span><span class="kw">)</span><span class="kw">;</span></div>
<div class="a" style="left:261.8px;top:308.29px;width:6px;height:6px;background:#4fc4ff;border-radius:50%;"></div>
<div class="a code" style="left:272px;top:307.59px;color:#808080">63</div>
<div class="a code" style="left:295.7px;top:307.59px;"><span class="kw">while</span><span class="kw"> </span><span class="kw">(</span><span class="kw"> </span><span class="kw">(</span><span class="gr">unsigned __int8</span><span class="kw">)</span><span class="fn">__gnu_cxx::operator!=&lt;unsigned char const*,std::vector&lt;unsigned</span><span class="kw"> </span><span class="fn">char&gt;&gt;</span><span class="kw">(</span><span class="kw">&amp;</span><span class="va">v15</span><span class="kw">,</span><span class="kw"> </span><span class="kw">&amp;</span><span class="va">v14</span><span class="kw">)</span><span class="kw"> </span><span class="kw">)</span></div>
<div class="a code" style="left:272px;top:317.58px;color:#808080">64</div>
<div class="a code" style="left:295.7px;top:317.58px;"><span class="kw">{</span></div>
<div class="a" style="left:261.8px;top:328.27px;width:6px;height:6px;background:#4fc4ff;border-radius:50%;"></div>
<div class="a code" style="left:272px;top:327.57px;color:#808080">65</div>
<div class="a code" style="left:295.7px;top:327.57px;"><span class="kw"> </span><span class="kw"> </span><span class="va">v30</span><span class="kw"> </span><span class="kw">=</span><span class="kw"> </span><span class="kw">*</span><span class="kw">(</span><span class="gr">_BYTE *</span><span class="kw">)</span><span class="fn">__gnu_cxx::__normal_iterator&lt;unsigned char const*,std::vector&lt;unsigned char&gt;&gt;::operator*</span><span class="kw">(</span><span class="kw">&amp;</span><span class="va">v15</span><span class="kw">)</span><span class="kw">;</span></div>
<div class="a" style="left:261.8px;top:338.26px;width:6px;height:6px;background:#4fc4ff;border-radius:50%;"></div>
<div class="a code" style="left:272px;top:337.56px;color:#808080">66</div>
<div class="a code" style="left:295.7px;top:337.56px;"><span class="kw"> </span><span class="kw"> </span><span class="fn">std::ostringstream::basic_ostringstream</span><span class="kw">(</span><span class="va">v13</span><span class="kw">,</span><span class="kw"> </span><span class="kw">16i64</span><span class="kw">)</span><span class="kw">;</span></div>
<div class="a" style="left:261.8px;top:348.25px;width:6px;height:6px;background:#4fc4ff;border-radius:50%;"></div>
<div class="a code" style="left:272px;top:347.55px;color:#808080">67</div>
<div class="a code" style="left:295.7px;top:347.55px;"><span class="kw"> </span><span class="kw"> </span><span class="va">v4</span><span class="kw"> </span><span class="kw">=</span><span class="kw"> </span><span class="fn">std::ostream::operator&lt;&lt;</span><span class="kw">(</span><span class="va">v13</span><span class="kw">,</span><span class="kw"> </span><span class="fn">std::hex</span><span class="kw">)</span><span class="kw">;</span></div>
<div class="a" style="left:261.8px;top:358.24px;width:6px;height:6px;background:#4fc4ff;border-radius:50%;"></div>
<div class="a code" style="left:272px;top:357.54px;color:#808080">68</div>
<div class="a code" style="left:295.7px;top:357.54px;"><span class="kw"> </span><span class="kw"> </span><span class="va">v5</span><span class="kw"> </span><span class="kw">=</span><span class="kw"> </span><span class="fn">std::setw</span><span class="kw">(</span><span class="kw">2</span><span class="kw">)</span><span class="kw">;</span></div>
<div class="a" style="left:261.8px;top:368.23px;width:6px;height:6px;background:#4fc4ff;border-radius:50%;"></div>
<div class="a code" style="left:272px;top:367.53px;color:#808080">69</div>
<div class="a code" style="left:295.7px;top:367.53px;"><span class="kw"> </span><span class="kw"> </span><span class="va">v6</span><span class="kw"> </span><span class="kw">=</span><span class="kw"> </span><span class="fn">std::operator&lt;&lt;&lt;char,std::char_traits&lt;char&gt;&gt;</span><span class="kw">(</span><span class="va">v4</span><span class="kw">,</span><span class="kw"> </span><span class="va">v5</span><span class="kw">)</span><span class="kw">;</span></div>
<div class="a" style="left:261.8px;top:378.22px;width:6px;height:6px;background:#4fc4ff;border-radius:50%;"></div>
<div class="a code" style="left:272px;top:377.52px;color:#808080">70</div>
<div class="a code" style="left:295.7px;top:377.52px;"><span class="kw"> </span><span class="kw"> </span><span class="va">v7</span><span class="kw"> </span><span class="kw">=</span><span class="kw"> </span><span class="fn">std::setfill&lt;char&gt;</span><span class="kw">(</span><span class="kw">48i64</span><span class="kw">)</span><span class="kw">;</span></div>
<div class="a" style="left:261.8px;top:388.21px;width:6px;height:6px;background:#4fc4ff;border-radius:50%;"></div>
<div class="a code" style="left:272px;top:387.51px;color:#808080">71</div>
<div class="a code" style="left:295.7px;top:387.51px;"><span class="kw"> </span><span class="kw"> </span><span class="va">v8</span><span class="kw"> </span><span class="kw">=</span><span class="kw"> </span><span class="fn">std::operator&lt;&lt;&lt;char,std::char_traits&lt;char&gt;&gt;</span><span class="kw">(</span><span class="va">v6</span><span class="kw">,</span><span class="kw"> </span><span class="va">v7</span><span class="kw">)</span><span class="kw">;</span></div>
<div class="a" style="left:261.8px;top:398.2px;width:6px;height:6px;background:#4fc4ff;border-radius:50%;"></div>
<div class="a code" style="left:272px;top:397.5px;color:#808080">72</div>
<div class="a code" style="left:295.7px;top:397.5px;"><span class="kw"> </span><span class="kw"> </span><span class="fn">std::ostream::operator&lt;&lt;</span><span class="kw">(</span><span class="va">v8</span><span class="kw">,</span><span class="kw"> </span><span class="va">v30</span><span class="kw">)</span><span class="kw">;</span></div>
<div class="a" style="left:261.8px;top:408.19px;width:6px;height:6px;background:#4fc4ff;border-radius:50%;"></div>
<div class="a code" style="left:272px;top:407.49px;color:#808080">73</div>
<div class="a code" style="left:295.7px;top:407.49px;"><span class="kw"> </span><span class="kw"> </span><span class="fn">std::ostringstream::str</span><span class="kw">(</span><span class="va">v29</span><span class="kw">,</span><span class="kw"> </span><span class="va">v13</span><span class="kw">)</span><span class="kw">;</span></div>
<div class="a" style="left:261.8px;top:418.18px;width:6px;height:6px;background:#4fc4ff;border-radius:50%;"></div>
<div class="a code" style="left:272px;top:417.48px;color:#808080">74</div>
<div class="a code" style="left:295.7px;top:417.48px;"><span class="kw"> </span><span class="kw"> </span><span class="fn">std::vector&lt;std::string&gt;::push_back</span><span class="kw">(</span><span class="va">v17</span><span class="kw">,</span><span class="kw"> </span><span class="va">v29</span><span class="kw">)</span><span class="kw">;</span></div>
<div class="a" style="left:261.8px;top:428.17px;width:6px;height:6px;background:#4fc4ff;border-radius:50%;"></div>
<div class="a code" style="left:272px;top:427.47px;color:#808080">75</div>
<div class="a code" style="left:295.7px;top:427.47px;"><span class="kw"> </span><span class="kw"> </span><span class="fn">std::string::~string</span><span class="kw">(</span><span class="va">v29</span><span class="kw">)</span><span class="kw">;</span></div>
<div class="a" style="left:261.8px;top:438.16px;width:6px;height:6px;background:#4fc4ff;border-radius:50%;"></div>
<div class="a code" style="left:272px;top:437.46px;color:#808080">76</div>
<div class="a code" style="left:295.7px;top:437.46px;"><span class="kw"> </span><span class="kw"> </span><span class="fn">std::ostringstream::~ostringstream</span><span class="kw">(</span><span class="va">v13</span><span class="kw">)</span><span class="kw">;</span></div>
<div class="a" style="left:261.8px;top:448.15px;width:6px;height:6px;background:#4fc4ff;border-radius:50%;"></div>
<div class="a code" style="left:272px;top:447.45px;color:#808080">77</div>
<div class="a code" style="left:295.7px;top:447.45px;"><span class="kw"> </span><span class="kw"> </span><span class="fn">__gnu_cxx::__normal_iterator&lt;unsigned char const*,std::vector&lt;unsigned char&gt;&gt;::operator++</span><span class="kw">(</span><span class="kw">&amp;</span><span class="va">v15</span><span class="kw">)</span><span class="kw">;</span></div>
<div class="a code" style="left:272px;top:457.44px;color:#808080">78</div>
<div class="a code" style="left:295.7px;top:457.44px;"><span class="kw">}</span></div>
<div class="a" style="left:261.8px;top:468.13px;width:6px;height:6px;background:#4fc4ff;border-radius:50%;"></div>
<div class="a code" style="left:272px;top:467.43px;color:#808080">79</div>
<div class="a code" style="left:295.7px;top:467.43px;"><span class="kw">if</span><span class="kw"> </span><span class="kw">(</span><span class="kw"> </span><span class="kw">(</span><span class="gr">unsigned __int8</span><span class="kw">)</span><span class="fn">compare</span><span class="kw">(</span><span class="va">v18</span><span class="kw">,</span><span class="kw"> </span><span class="va">v17</span><span class="kw">)</span><span class="kw"> </span><span class="kw">)</span></div>
<div class="a" style="left:261.8px;top:478.12px;width:6px;height:6px;background:#4fc4ff;border-radius:50%;"></div>
<div class="a code" style="left:272px;top:477.42px;color:#808080">80</div>
<div class="a code" style="left:295.7px;top:477.42px;"><span class="kw"> </span><span class="kw"> </span><span class="va">v9</span><span class="kw"> </span><span class="kw">=</span><span class="kw"> </span><span class="fn">std::operator&lt;&lt;&lt;std::char_traits&lt;char&gt;&gt;</span><span class="kw">(</span><span class="fn">refptr__ZSt4cout</span><span class="kw">,</span><span class="kw"> </span><span class="st">&quot;Right!&quot;</span><span class="kw">)</span><span class="kw">;</span></div>
<div class="a code" style="left:272px;top:487.41px;color:#808080">81</div>
<div class="a code" style="left:295.7px;top:487.41px;"><span class="kw">else</span></div>
<div class="a" style="left:261.8px;top:498.1px;width:6px;height:6px;background:#4fc4ff;border-radius:50%;"></div>
<div class="a code" style="left:272px;top:497.4px;color:#808080">82</div>
<div class="a code" style="left:295.7px;top:497.4px;"><span class="kw"> </span><span class="kw"> </span><span class="va">v9</span><span class="kw"> </span><span class="kw">=</span><span class="kw"> </span><span class="fn">std::operator&lt;&lt;&lt;std::char_traits&lt;char&gt;&gt;</span><span class="kw">(</span><span class="fn">refptr__ZSt4cout</span><span class="kw">,</span><span class="kw"> </span><span class="st">&quot;Wrong.&quot;</span><span class="kw">)</span><span class="kw">;</span></div>
<div class="a" style="left:261.8px;top:508.09px;width:6px;height:6px;background:#4fc4ff;border-radius:50%;"></div>
<div class="a code" style="left:272px;top:507.39px;color:#808080">83</div>
<div class="a code" style="left:295.7px;top:507.39px;"><span class="kw">(</span><span class="kw">(</span><span class="gr">void</span><span class="kw"> (</span><span class="gr">__fastcall *</span><span class="kw">)(</span><span class="gr">__int64</span><span class="kw">))</span><span class="fn">refptr__ZSt4endlIcSt11char_traitsIcEERSt13basic_ostreamIT_T0_ES6_</span><span class="kw">)</span><span class="kw">(</span><span class="va">v9</span><span class="kw">)</span><span class="kw">;</span></div>
<div class="a" style="left:261.8px;top:518.08px;width:6px;height:6px;background:#4fc4ff;border-radius:50%;"></div>
<div class="a code" style="left:272px;top:517.38px;color:#808080">84</div>
<div class="a code" style="left:295.7px;top:517.38px;"><span class="fn">std::string::basic_string</span><span class="kw">(</span><span class="va">v16</span><span class="kw">)</span><span class="kw">;</span></div>
<div class="a" style="left:261.8px;top:528.07px;width:6px;height:6px;background:#4fc4ff;border-radius:50%;"></div>
<div class="a code" style="left:272px;top:527.37px;color:#808080">85</div>
<div class="a code" style="left:295.7px;top:527.37px;"><span class="fn">you</span><span class="kw">(</span><span class="va">v22</span><span class="kw">,</span><span class="kw"> </span><span class="va">v16</span><span class="kw">,</span><span class="kw"> </span><span class="va">v23</span><span class="kw">)</span><span class="kw">;</span></div>
<div class="a code" style="left:295.7px;top:537.36px;"><span class="va">v10</span><span class="kw"> </span><span class="kw">=</span><span class="kw"> </span><span class="fn">std::operator&lt;&lt;&lt;std::char_traits&lt;char&gt;&gt;</span><span class="kw">(</span><span class="fn">refptr__ZSt4cout</span><span class="kw">,</span><span class="kw"> </span><span class="st">&quot;Decrypted flag: &quot;</span><span class="kw">)</span><span class="kw">;</span></div>
<div class="a" style="left:286px;top:543.8px;width:982.5px;height:13.2px;background:#f0f0f0;"></div>
<div class="a" style="left:325.6px;top:545px;width:0.8px;height:11.4px;background:#cfcfcf;"></div>
<div class="a" style="left:412px;top:545px;width:0.8px;height:11.4px;background:#cfcfcf;"></div>
<div class="a code" style="left:287.6px;top:547.0px;color:#3a3a3a;letter-spacing:-0.3px">00001251 main:73 (401C51)</div>
<div class="a" style="left:1269px;top:543.8px;width:9.6px;height:13.2px;background:#f0f0f0;"></div>
<div class="a" style="left:0px;top:560px;width:1280px;height:1px;background:#a8a8a8;"></div>
<div class="a" style="left:0px;top:562px;width:1280px;height:16.5px;background:#f0f0f0;"></div>
<div class="a sim" style="left:17px;top:566.2px;">Output</div>
<svg class="a" style="left:3px;top:564px" width="11" height="12" viewBox="0 0 11 12"><defs><linearGradient id="og" x1="0" y1="0" x2="1" y2="0"><stop offset="0" stop-color="#38b8f0"/><stop offset="1" stop-color="#1028c0"/></linearGradient></defs><rect x="0.5" y="0.6" width="9" height="9.8" fill="#eef2fa" stroke="#8a98ac" stroke-width="0.8"/><rect x="0.2" y="0.2" width="9.6" height="1.7" fill="url(#og)"/><rect x="2.2" y="4" width="5.4" height="4.8" fill="#a4aec0"/></svg>
<div class="a" style="left:0px;top:579.3px;width:1280px;height:1px;background:#a4a4a4;"></div>
<div class="a" style="left:0px;top:581px;width:1280px;height:82px;background:#fff;border-top:1px solid #a8a8a8;"></div>
<div class="a code" style="left:4.6px;top:583.2px;color:#000">4ABE10: using guessed type __int64 __fastcall std::operator&gt;&gt;&lt;char&gt;(_QWORD, _QWORD);</div>
<div class="a code" style="left:4.6px;top:593.2px;color:#000">4B6C80: using guessed type void *refptr__ZSt3cin;</div>
<div class="a code" style="left:4.6px;top:603.2px;color:#000">4B6CB0: using guessed type void *refptr__ZSt4cout;</div>
<div class="a code" style="left:4.6px;top:613.2px;color:#000">4B6CC0: using guessed type __int64 (__fastcall *refptr__ZSt4endlIcSt11char_traitsIcEERSt13basic_ostreamIT_T0_ES6_)();</div>
<div class="a code" style="left:4.6px;top:623.2px;color:#000">Using FLIRT signature: SEH for vc64 7-14</div>
<div class="a code" style="left:4.6px;top:633.2px;color:#000">Propagating type information...</div>
<div class="a code" style="left:4.6px;top:643.2px;color:#000">Function argument information has been propagated</div>
<div class="a code" style="left:4.6px;top:653.2px;color:#000">The initial autoanalysis has been finished.</div>
<div class="a" style="left:1268.5px;top:582px;width:11px;height:80.5px;background:#f0f0f0;"></div>
<div class="a" style="left:1268.5px;top:638px;width:11px;height:13px;background:#c8c8c8;"></div>
<div class="a" style="left:0px;top:662.5px;width:1280px;height:1px;background:#a8a8a8;"></div>
<div class="a" style="left:1279px;top:560px;width:1px;height:103px;background:#a8a8a8;"></div>
<div class="a" style="left:0px;top:560px;width:1px;height:103px;background:#a8a8a8;"></div>
<div class="a" style="left:48.8px;top:696.6px;width:2.6px;height:2.6px;border-radius:50%;background:#c8c8c8"></div>
<div class="a" style="left:0px;top:663.5px;width:1280px;height:15.5px;background:#f0f0f0;"></div>
<div class="a" style="left:1.2px;top:664.4px;width:30.8px;height:13.2px;background:#e1e1e1;border:1px solid #adadad;"></div>
<div class="a sim" style="left:5px;top:667.9px;">Python</div>
<div class="a" style="left:34.5px;top:664.4px;width:1244.5px;height:13.2px;background:#fff;border:1px solid #a0a0a0;"></div>
<div class="a" style="left:0px;top:679px;width:1280px;height:13.5px;background:#f0f0f0;"></div>
<div class="a code" style="left:1.2px;top:682.9px;color:#000">AU:  idle</div>
<div class="a code" style="left:57px;top:682.9px;color:#000">Down</div>
<div class="a code" style="left:107.6px;top:682.9px;color:#000">Disk: 42GB</div>
<div class="a" style="left:54px;top:680.5px;width:1px;height:10px;background:#d4d4d4;"></div>
<div class="a" style="left:104.5px;top:680.5px;width:1px;height:10px;background:#d4d4d4;"></div>
<div class="a" style="left:155.5px;top:680.5px;width:1px;height:10px;background:#d4d4d4;"></div>
<div class="a" style="left:0px;top:692.2px;width:1280px;height:6px;background:#fff;"></div>
<div class="a" style="left:0px;top:692.2px;width:289px;height:6px;background:#000;"></div>
<div class="a" style="left:1037.5px;top:692.2px;width:243px;height:6px;background:#000;"></div>
<div class="a" style="left:1276.6px;top:692.2px;width:0.9px;height:6px;background:#5a5a5a;"></div>
<div class="a" style="left:289px;top:692.2px;width:748.5px;height:5.8px;overflow:hidden;background:#fff"><div class="a ui" style="left:132.5px;top:-3.3px;font-size:8.6px;color:#222">Qt5Script.dll</div><div class="a ui" style="left:292.5px;top:-3.3px;font-size:8.6px;color:#666">2023/11/5 17:15</div><div class="a" style="left:389.5px;top:-3.8px;font-family:'Liberation Sans','Noto Sans CJK SC',sans-serif;font-size:8px;color:#666;white-space:pre">应用程序扩展</div><div class="a ui" style="left:479.5px;top:-3.3px;font-size:8.6px;color:#666">1,277 KB</div><div class="a" style="left:121.5px;top:2.1px;width:6px;height:6px;border:1px solid #999"></div></div>
<div class="a ui" style="left:1211px;top:695.4px;font-size:8.6px;color:#fff;font-weight:bold">15:15</div>
<svg class="a" style="left:0;top:0" width="1280" height="80" viewBox="0 0 1280 80"><g><rect x="6.8" y="1.9" width="5.4" height="5.6" fill="#2cc2c4"/><path d="M1.3 7Q1 3.2 4.6 2.9Q7.4 2.8 8.6 5.2L12.1 6.6Q12.4 9 10.6 9.8Q10 11.4 10.2 12.9H4.2Q1.9 10.4 1.3 7z" fill="#15100e"/><path d="M2.9 5.6Q3.4 4 5 4.2Q6.4 4.6 6.6 6.4L6.7 8.4Q7.4 10 8.6 12.9H5Q3.3 10.6 2.9 8z" fill="#e9c9a2"/><path d="M3.2 7.2Q4 8 5 7.6" stroke="#8a5a3a" stroke-width="0.5" fill="none"/><path d="M7.8 4.4l3.2 1.5-.5 1.4-3-1z" fill="#0f5a62"/></g><path d="M1199.2 7.1h6.7" stroke="#777" stroke-width="1.1"/><path d="M1229.4 5.2h5v4.4h-5z M1230.8 5.2l1.2-1.7h4.3v4.3l-1.9 1.6 M1234.4 5.2l1.9-1.7" fill="none" stroke="#222" stroke-width="0.9"/><path d="M1260 3.4l6.8 6.6M1266.8 3.4l-6.8 6.6" stroke="#222" stroke-width="0.9"/><rect x="5.6" y="26.6" width="4.4" height="0.7" fill="#333"/><rect x="28.7" y="26.6" width="4.8" height="0.7" fill="#333"/><rect x="54.2" y="26.6" width="3.5" height="0.7" fill="#333"/><rect x="106.6" y="26.6" width="4.6" height="0.7" fill="#333"/><rect x="121.6" y="26.6" width="5.4" height="0.7" fill="#333"/><rect x="168.3" y="26.6" width="4.6" height="0.7" fill="#333"/><rect x="222.6" y="26.6" width="4.6" height="0.7" fill="#333"/><rect x="238.6" y="26.6" width="6.4" height="0.7" fill="#333"/><rect x="279.6" y="26.6" width="7.8" height="0.7" fill="#333"/><rect x="0" y="29.6" width="1280" height="0.8" fill="#fdfdfd"/><rect x="0" y="47" width="1280" height="1" fill="#fbfbfb"/><rect x="0" y="46.3" width="1280" height="0.7" fill="#dadada"/><rect x="2.4" y="33" width="1.2" height="1" fill="#b8b8b8"/><rect x="2.4" y="35.6" width="1.2" height="1" fill="#b8b8b8"/><rect x="2.4" y="38.2" width="1.2" height="1" fill="#b8b8b8"/><rect x="2.4" y="40.800000000000004" width="1.2" height="1" fill="#b8b8b8"/><rect x="2.4" y="43.400000000000006" width="1.2" height="1" fill="#b8b8b8"/><rect x="41.6" y="33" width="1.2" height="1" fill="#b8b8b8"/><rect x="41.6" y="35.6" width="1.2" height="1" fill="#b8b8b8"/><rect x="41.6" y="38.2" width="1.2" height="1" fill="#b8b8b8"/><rect x="41.6" y="40.800000000000004" width="1.2" height="1" fill="#b8b8b8"/><rect x="41.6" y="43.400000000000006" width="1.2" height="1" fill="#b8b8b8"/><rect x="96" y="33" width="1.2" height="1" fill="#b8b8b8"/><rect x="96" y="35.6" width="1.2" height="1" fill="#b8b8b8"/><rect x="96" y="38.2" width="1.2" height="1" fill="#b8b8b8"/><rect x="96" y="40.800000000000004" width="1.2" height="1" fill="#b8b8b8"/><rect x="96" y="43.400000000000006" width="1.2" height="1" fill="#b8b8b8"/><rect x="216" y="33" width="1.2" height="1" fill="#b8b8b8"/><rect x="216" y="35.6" width="1.2" height="1" fill="#b8b8b8"/><rect x="216" y="38.2" width="1.2" height="1" fill="#b8b8b8"/><rect x="216" y="40.800000000000004" width="1.2" height="1" fill="#b8b8b8"/><rect x="216" y="43.400000000000006" width="1.2" height="1" fill="#b8b8b8"/><rect x="255" y="33" width="1.2" height="1" fill="#b8b8b8"/><rect x="255" y="35.6" width="1.2" height="1" fill="#b8b8b8"/><rect x="255" y="38.2" width="1.2" height="1" fill="#b8b8b8"/><rect x="255" y="40.800000000000004" width="1.2" height="1" fill="#b8b8b8"/><rect x="255" y="43.400000000000006" width="1.2" height="1" fill="#b8b8b8"/><rect x="378.2" y="33" width="1.2" height="1" fill="#b8b8b8"/><rect x="378.2" y="35.6" width="1.2" height="1" fill="#b8b8b8"/><rect x="378.2" y="38.2" width="1.2" height="1" fill="#b8b8b8"/><rect x="378.2" y="40.800000000000004" width="1.2" height="1" fill="#b8b8b8"/><rect x="378.2" y="43.400000000000006" width="1.2" height="1" fill="#b8b8b8"/><rect x="576" y="33" width="1.2" height="1" fill="#b8b8b8"/><rect x="576" y="35.6" width="1.2" height="1" fill="#b8b8b8"/><rect x="576" y="38.2" width="1.2" height="1" fill="#b8b8b8"/><rect x="576" y="40.800000000000004" width="1.2" height="1" fill="#b8b8b8"/><rect x="576" y="43.400000000000006" width="1.2" height="1" fill="#b8b8b8"/><rect x="38" y="31.5" width="0.8" height="15" fill="#c9c9c9"/><rect x="38.8" y="31.5" width="0.8" height="15" fill="#fff"/><rect x="92" y="31.5" width="0.8" height="15" fill="#c9c9c9"/><rect x="92.8" y="31.5" width="0.8" height="15" fill="#fff"/><rect x="212" y="31.5" width="0.8" height="15" fill="#c9c9c9"/><rect x="212.8" y="31.5" width="0.8" height="15" fill="#fff"/><rect x="251" y="31.5" width="0.8" height="15" fill="#c9c9c9"/><rect x="251.8" y="31.5" width="0.8" height="15" fill="#fff"/><rect x="374" y="31.5" width="0.8" height="15" fill="#c9c9c9"/><rect x="374.8" y="31.5" width="0.8" height="15" fill="#fff"/><rect x="573" y="31.5" width="0.8" height="15" fill="#c9c9c9"/><rect x="573.8" y="31.5" width="0.8" height="15" fill="#fff"/><rect x="147.2" y="34" width="0.8" height="11" fill="#d6d6d6"/><rect x="166.4" y="34" width="0.8" height="11" fill="#d6d6d6"/><rect x="186" y="34" width="0.8" height="11" fill="#d6d6d6"/><rect x="539.3" y="34" width="0.8" height="11" fill="#d6d6d6"/><path d="M8.8 37.2h3.4l1 1.2h5.4v6.2H8.8z" fill="#e8b020"/><path d="M8.6 44.8l2-4.8h8.8l-2 4.8z" fill="#ffe060" stroke="#d8a010" stroke-width="0.4"/><path d="M13.2 37.6q1.6-2.6 4-2.6l-.2-1.2 2.4 2-2 1.9-.2-1.2q-1.8 0-4 1.1z" fill="#2a60e0"/><rect x="24.6" y="34" width="10.4" height="10.2" rx="0.8" fill="#6a2ad8"/><rect x="26.4" y="34.6" width="6.8" height="4.2" fill="#f4e6f4"/><rect x="26.4" y="36" width="6.8" height="0.6" fill="#e8a0b0"/><rect x="27.2" y="40.6" width="5.2" height="3.6" fill="#d8d0f0"/><rect x="28" y="41.2" width="1.6" height="2.6" fill="#6a2ad8"/><path d="M48.2 39.4l4.6-3.8v2.2h4.2v3.2h-4.2v2.2z" fill="#b4b4b4" stroke="#787878" stroke-width="0.9"/><path d="M62 38h4.6l-2.3 2.6z" fill="#555"/><path d="M80.8 39.4l-4.6-3.8v2.2h-4.2v3.2h4.2v2.2z" fill="#b4b4b4" stroke="#787878" stroke-width="0.9"/><path d="M85.2 38h4.6l-2.3 2.6z" fill="#555"/><path d="M101.8 40l1.1-4.6q.4-1 1.3-1 .9 0 1.2 1l.2 1.2h.4l.2-1.2q.3-1 1.2-1 .9 0 1.3 1l1.1 4.6q-.2 1-1.5 1-1.2 0-1.4-1l-.3-1.6h-1.6l-.3 1.6q-.2 1-1.4 1-1.3 0-1.5-1z" fill="#1f4fb4"/><path d="M103.1 35.6l-.7 3.6M106.69999999999999 35.6l.5 2.4" stroke="#7fb2f2" stroke-width="0.7"/><rect x="106.19999999999999" y="38.6" width="6.6" height="5.8" fill="#fff" stroke="#3a6ab0" stroke-width="0.9"/><path d="M108 40.6h2.8M108 42.4h2.8M108.8 39.8v3.6M110 39.8v3.6" stroke="#1a3a90" stroke-width="0.6"/><path d="M117.2 40l1.1-4.6q.4-1 1.3-1 .9 0 1.2 1l.2 1.2h.4l.2-1.2q.3-1 1.2-1 .9 0 1.3 1l1.1 4.6q-.2 1-1.5 1-1.2 0-1.4-1l-.3-1.6h-1.6l-.3 1.6q-.2 1-1.4 1-1.3 0-1.5-1z" fill="#1f4fb4"/><path d="M118.5 35.6l-.7 3.6M122.1 35.6l.5 2.4" stroke="#7fb2f2" stroke-width="0.7"/><rect x="121.6" y="38.6" width="6.6" height="5.8" fill="#fff" stroke="#3a6ab0" stroke-width="0.9"/><path d="M121.6 40.2h2.8M121.6 43.2h2.8M123 40.2v3" stroke="#1a3a90" stroke-width="0.9"/><path d="M132.6 40l1.1-4.6q.4-1 1.3-1 .9 0 1.2 1l.2 1.2h.4l.2-1.2q.3-1 1.2-1 .9 0 1.3 1l1.1 4.6q-.2 1-1.5 1-1.2 0-1.4-1l-.3-1.6h-1.6l-.3 1.6q-.2 1-1.4 1-1.3 0-1.5-1z" fill="#1f4fb4"/><path d="M133.9 35.6l-.7 3.6M137.5 35.6l.5 2.4" stroke="#7fb2f2" stroke-width="0.7"/><rect x="137.0" y="38.6" width="6.6" height="5.8" fill="#fff" stroke="#3a6ab0" stroke-width="0.9"/><rect x="137" y="38.8" width="7.2" height="5.6" fill="#d0e0ff" stroke="#3a6ab0" stroke-width="0.8"/><path d="M138.2 41h5M138.2 42.8h5" stroke="#1a3a90" stroke-width="0.6"/><path d="M152.2 40l1.1-4.6q.4-1 1.3-1 .9 0 1.2 1l.2 1.2h.4l.2-1.2q.3-1 1.2-1 .9 0 1.3 1l1.1 4.6q-.2 1-1.5 1-1.2 0-1.4-1l-.3-1.6h-1.6l-.3 1.6q-.2 1-1.4 1-1.3 0-1.5-1z" fill="#a0a0a0"/><path d="M155.2 40h4.4v-2l3.4 3.2-3.4 3.2v-2h-4.4z" fill="#9c9c9c" stroke="#888" stroke-width="0.4"/><defs><linearGradient id="gb" x1="0" y1="0" x2="0" y2="1"><stop offset="0" stop-color="#40c8ff"/><stop offset="0.5" stop-color="#1060ff"/><stop offset="1" stop-color="#0020e0"/></linearGradient></defs><path d="M173 34.2q5 0 5.6 4.2v2.2h2.4l-4 4.4-4-4.4h2.4v-2q0-3-2.4-4.4z" fill="url(#gb)"/><rect x="190.5" y="34.5" width="10.6" height="10.2" rx="0.8" fill="#f2f2f2" stroke="#777" stroke-width="1.1"/><text x="192.6" y="43.3" font-family="Liberation Sans,sans-serif" font-size="9.4" fill="#3c3c3c">A</text><path d="M205.2 38h4.6l-2.3 2.6z" fill="#555"/><rect x="222.2" y="34.2" width="9.8" height="9.6" fill="#fff" stroke="#3a80f0" stroke-width="0.9"/><rect x="222.2" y="34.2" width="9.8" height="1.4" fill="#3a80f0"/><path d="M227.1 36.6l3.6 6h-7.2z" fill="#e01818"/><path d="M226.4 41h1.4" stroke="#fff" stroke-width="0.7"/><defs><radialGradient id="gg" cx="0.4" cy="0.35" r="0.7"><stop offset="0" stop-color="#80ff80"/><stop offset="0.5" stop-color="#20d020"/><stop offset="1" stop-color="#109010"/></radialGradient></defs><circle cx="242.7" cy="39.2" r="4.7" fill="url(#gg)" stroke="#108810" stroke-width="0.6"/><rect x="261" y="38.6" width="9.6" height="5.4" fill="#e8e8e8" stroke="#a0a0a0" stroke-width="0.7"/><text x="261.6" y="43.2" font-family="Liberation Sans,sans-serif" font-size="4.6" fill="#777">008</text><path d="M265.6 36.2h5.4M268.3 33.5v5.4" stroke="#808080" stroke-width="1.9"/><rect x="276.2" y="38.8" width="9.8" height="5.4" fill="#909090"/><path d="M277.4 40.4h7.4M277.4 42.4h7.4" stroke="#e0e0e0" stroke-width="0.8"/><path d="M281.20000000000005 36.2h5.4M283.90000000000003 33.5v5.4" stroke="#808080" stroke-width="1.9"/><rect x="291.4" y="37.6" width="7" height="7" fill="#f6f6f6" stroke="#b0b0b0" stroke-width="0.7"/><text x="292.6" y="43.6" font-family="Liberation Sans,sans-serif" font-size="6.2" fill="#858585">A</text><path d="M296.8 36.2h5.4M299.5 33.5v5.4" stroke="#808080" stroke-width="1.9"/><text x="306.4" y="44.6" font-family="Liberation Serif,serif" font-size="7.4" fill="#858585">‘s’</text><path d="M312.0 36.2h5.4M314.7 33.5v5.4" stroke="#808080" stroke-width="1.9"/><path d="M321.6 38h4.6l-2.3 2.6z" fill="#555"/><path d="M334 37v7.4M330.8 38.8l6.4 3.8M330.8 42.6l6.4-3.8" stroke="#8c8c8c" stroke-width="1.5"/><path d="M335.8 36h5M338.3 33.5v5" stroke="#808080" stroke-width="1.8"/><rect x="345.4" y="38.4" width="10.2" height="5.8" fill="#d8d8d8" stroke="#909090" stroke-width="0.8"/><path d="M347 43l6.6-3.2v3.2z" fill="#888"/><path d="M350.4 40.6l4.2-5.2" stroke="#a0a0a0" stroke-width="1.1"/><path d="M361.6 34.4l9.6 9.4M371.2 34.4l-9.6 9.4" stroke="#8c8c8c" stroke-width="1.3"/><path d="M386.4 35.6l6.8 4.2-6.8 4.2z" fill="#a0a0a0" stroke="#7c7c7c" stroke-width="0.8"/><rect x="400.4" y="35" width="9" height="9" rx="1.4" fill="#8e8e8e"/><rect x="403" y="37" width="1.2" height="5" fill="#fff"/><rect x="405.8" y="37" width="1.2" height="5" fill="#fff"/><rect x="415.4" y="35" width="9.4" height="9" rx="1.4" fill="#8e8e8e"/><rect x="417.8" y="37.2" width="4.6" height="4.6" fill="#fff"/><rect x="428.3" y="32.7" width="108.6" height="13" fill="#e1e1e1" stroke="#adadad" stroke-width="0.8"/><path d="M528.6 38.2l3 3 3-3" fill="none" stroke="#444" stroke-width="0.9"/><rect x="546.6" y="36.8" width="7" height="7" fill="#f4f4f4" stroke="#b0b0b0" stroke-width="0.7"/><text x="548" y="43" font-family="Liberation Sans,sans-serif" font-weight="bold" font-size="6.4" fill="#777">C</text><path d="M543.4 37h2.4v-2l3 3-3 3v-2h-2.4z" fill="#999"/><rect x="556.7" y="32.3" width="15.4" height="13.6" fill="#cce4f7" stroke="#9fcdf3" stroke-width="0.7"/><rect x="559.4" y="37" width="7.2" height="7.6" fill="#fff" stroke="#3050a0" stroke-width="0.7"/><text x="560.4" y="43.6" font-family="Liberation Sans,sans-serif" font-weight="bold" font-size="7" fill="#101090">C</text><path d="M565 34.2l4.8 3-4.8 3z" fill="#18b030"/><rect x="582.4" y="34.4" width="10.4" height="9.8" fill="#e8f0ff" stroke="#3a80f0" stroke-width="0.8"/><rect x="582.4" y="34.4" width="10.4" height="1.4" fill="#58a0f8"/><rect x="583.6" y="36.6" width="2.6" height="7" fill="#9ab0f0"/><rect x="587.6" y="38.4" width="1.6" height="5.4" fill="#6a6a90"/><circle cx="588.4" cy="36.4" r="2.2" fill="#f01818"/><rect x="598.2" y="38" width="3.4" height="6.6" fill="#181880"/><path d="M598.6 41h2.6M598.6 42.8h2.6" stroke="#8a8ad0" stroke-width="0.6"/><circle cx="599.8" cy="36.6" r="2.7" fill="#f01818"/><path d="M602.6 36.8h5.2M605.2 34.2v5.2" stroke="#108818" stroke-width="1.7"/><rect x="613.2" y="38" width="3.4" height="6.6" fill="#8a8a8a"/><path d="M613.6 41h2.6M613.6 42.8h2.6" stroke="#c8c8c8" stroke-width="0.6"/><circle cx="614.8" cy="36.6" r="2.5" fill="#a4a4a4"/><path d="M618.2 34.2l4.8 4.6M623 34.2l-4.8 4.6" stroke="#909090" stroke-width="0.8"/><rect x="2.4" y="51" width="1.2" height="1" fill="#b8b8b8"/><rect x="2.4" y="53.6" width="1.2" height="1" fill="#b8b8b8"/><rect x="2.4" y="56.2" width="1.2" height="1" fill="#b8b8b8"/><rect x="2.4" y="58.800000000000004" width="1.2" height="1" fill="#b8b8b8"/><rect x="2.4" y="61.400000000000006" width="1.2" height="1" fill="#b8b8b8"/><path d="M13.2 51.2v5l-4.4-2.5z" fill="#4a4a4a"/><path d="M9 58v5l4.4-2.5z" fill="#4a4a4a"/><rect x="18" y="50" width="1249.4" height="13.2" fill="#c0c0c0"/><rect x="18" y="50" width="928" height="13.2" fill="#00a0e8"/><rect x="18.9" y="50" width="0.9" height="13.2" fill="#b0ffff"/><rect x="77.9" y="50" width="0.8" height="13.2" fill="#a0f0ff"/><path d="M21.6 51h1.6v2.6h1l-1.8 2.2-1.8-2.2h1z" fill="#ffee20"/><rect x="947.44" y="50" width="1.06" height="13.2" fill="#b0b058"/><rect x="951.16" y="50" width="5.31" height="13.2" fill="#b0b058"/><rect x="957.53" y="50" width="4.78" height="13.2" fill="#b0b058"/><rect x="974.00" y="50" width="4.78" height="13.2" fill="#b0b058"/><rect x="983.56" y="50" width="1.59" height="13.2" fill="#b0b058"/><rect x="986.75" y="50" width="0.53" height="13.2" fill="#b0b058"/><rect x="990.46" y="50" width="4.78" height="13.2" fill="#b0b058"/><rect x="1028.18" y="50" width="1.59" height="13.2" fill="#b0b058"/><rect x="1036.15" y="50" width="1.06" height="13.2" fill="#b0b058"/><rect x="1040.40" y="50" width="1.59" height="13.2" fill="#b0b058"/><rect x="1107.86" y="50" width="2.12" height="13.2" fill="#b0b058"/><rect x="1111.58" y="50" width="1.59" height="13.2" fill="#b0b058"/><rect x="1114.24" y="50" width="2.66" height="13.2" fill="#b0b058"/><rect x="1123.27" y="50" width="1.59" height="13.2" fill="#b0b058"/><rect x="1126.99" y="50" width="2.12" height="13.2" fill="#b0b058"/><rect x="1130.17" y="50" width="1.06" height="13.2" fill="#b0b058"/><rect x="1133.89" y="50" width="4.25" height="13.2" fill="#b0b058"/><rect x="1140.80" y="50" width="1.06" height="13.2" fill="#b0b058"/><rect x="1143.98" y="50" width="2.12" height="13.2" fill="#b0b058"/><rect x="1148.23" y="50" width="4.25" height="13.2" fill="#b0b058"/><rect x="1154.08" y="50" width="1.59" height="13.2" fill="#b0b058"/><rect x="1157.26" y="50" width="1.59" height="13.2" fill="#b0b058"/><rect x="1160.98" y="50" width="4.25" height="13.2" fill="#b0b058"/><rect x="1166.29" y="50" width="2.66" height="13.2" fill="#b0b058"/><rect x="1173.73" y="50" width="1.59" height="13.2" fill="#b0b058"/><rect x="1177.98" y="50" width="1.06" height="13.2" fill="#b0b058"/><rect x="1182.76" y="50" width="1.59" height="13.2" fill="#b0b058"/><rect x="1185.95" y="50" width="1.59" height="13.2" fill="#b0b058"/><rect x="1193.92" y="50" width="7.97" height="13.2" fill="#b0b058"/><rect x="1202.95" y="50" width="2.12" height="13.2" fill="#ffa8ff"/><rect x="1207.89" y="50" width="1.17" height="13.2" fill="#b4b468"/><rect x="1213.04" y="50" width="1.06" height="13.2" fill="#b4b468"/><rect x="1218.35" y="50" width="48.87" height="13.2" fill="#000"/><path d="M1272.8 51v5l4.4-2.5z" fill="#4a4a4a"/><path d="M1277.2 57.6v5l-4.4-2.5z" fill="#4a4a4a"/><rect x="2.4" y="67" width="1.2" height="1" fill="#b8b8b8"/><rect x="2.4" y="69.6" width="1.2" height="1" fill="#b8b8b8"/><rect x="2.4" y="72.19999999999999" width="1.2" height="1" fill="#b8b8b8"/><rect x="2.4" y="74.79999999999998" width="1.2" height="1" fill="#b8b8b8"/><rect x="2.4" y="77.39999999999998" width="1.2" height="1" fill="#b8b8b8"/></svg>
<div class="a sim" style="left:431.2px;top:36.3px;">No debugger</div>
<svg class="a" style="left:0;top:0" width="1280" height="698" viewBox="0 0 1280 698"><rect x="208.4" y="87.80000000000001" width="6.2" height="5.6" fill="#fff" stroke="#222" stroke-width="0.8"/><rect x="208" y="87.4" width="7" height="1.6" fill="#222"/><rect x="227.8" y="87.60000000000001" width="4" height="3.6" fill="#f0f0f0" stroke="#222" stroke-width="0.8"/><rect x="226.4" y="89.60000000000001" width="4.2" height="3.6" fill="#f8f8f8" stroke="#222" stroke-width="0.8"/><rect x="226.4" y="89.4" width="4.2" height="1" fill="#222"/><path d="M243.6 88.2l4.8 4.8M248.4 88.2l-4.8 4.8" stroke="#222" stroke-width="1.3"/><rect x="1233.0" y="568.1999999999999" width="6.2" height="5.6" fill="#fff" stroke="#222" stroke-width="0.8"/><rect x="1232.6" y="567.8" width="7" height="1.6" fill="#222"/><rect x="1252.6" y="568.0" width="4" height="3.6" fill="#f0f0f0" stroke="#222" stroke-width="0.8"/><rect x="1251.2" y="570.0" width="4.2" height="3.6" fill="#f8f8f8" stroke="#222" stroke-width="0.8"/><rect x="1251.2" y="569.8" width="4.2" height="1" fill="#222"/><path d="M1268 568.5999999999999l4.8 4.8M1272.8 568.5999999999999l-4.8 4.8" stroke="#222" stroke-width="1.3"/><path d="M246.70000000000002 109.2l2.6-2.8 2.6 2.8" fill="none" stroke="#404040" stroke-width="1.1"/><path d="M246.70000000000002 523.9l2.6 2.8 2.6-2.8" fill="none" stroke="#404040" stroke-width="1.1"/><path d="M7.0 534.0l-2.8 2.6 2.8 2.6" fill="none" stroke="#404040" stroke-width="1.1"/><path d="M236.4 534.0l2.8 2.6-2.8 2.6" fill="none" stroke="#404040" stroke-width="1.1"/><path d="M1271.2 103.9l2.6-2.8 2.6 2.8" fill="none" stroke="#404040" stroke-width="1.1"/><path d="M1271.2 549.1l2.6 2.8 2.6-2.8" fill="none" stroke="#404040" stroke-width="1.1"/><path d="M1271.2 589.4l2.6-2.8 2.6 2.8" fill="none" stroke="#404040" stroke-width="1.1"/><path d="M1271.2 655.1l2.6 2.8 2.6-2.8" fill="none" stroke="#404040" stroke-width="1.1"/><rect x="2.9" y="84.4" width="10.2" height="10" rx="0.8" fill="#fff" stroke="#4a8ae8" stroke-width="1"/><rect x="2.9" y="84.4" width="10.2" height="1.8" fill="#38a0f8"/><text x="6.2" y="93.4" font-family="Liberation Serif,serif" font-style="italic" font-weight="bold" font-size="8.5" fill="#203060">f</text></svg>
</body></html>
